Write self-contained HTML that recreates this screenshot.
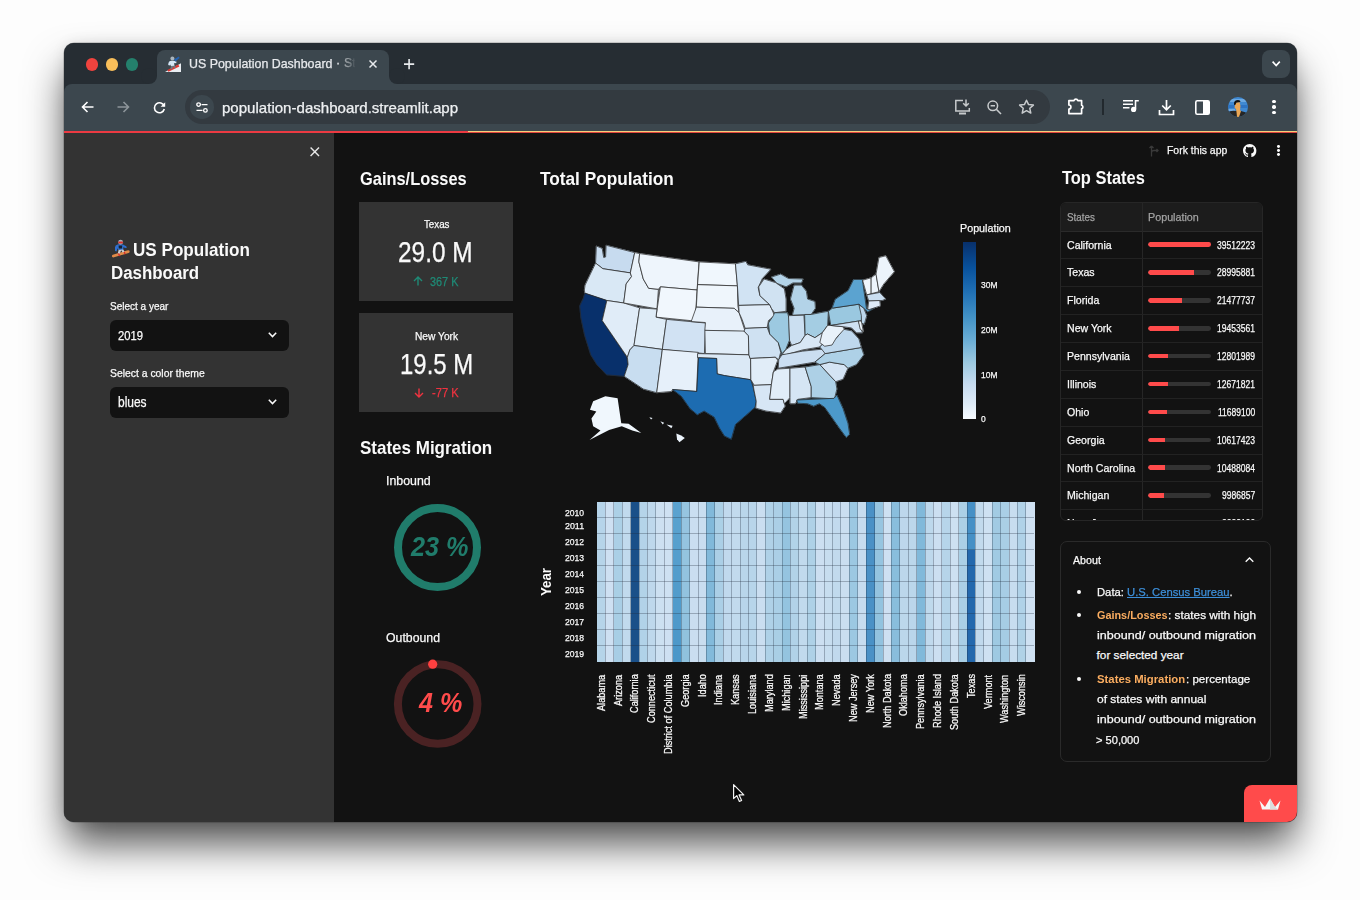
<!DOCTYPE html>
<html><head><meta charset="utf-8">
<style>
*{box-sizing:border-box;margin:0;padding:0}
html,body{width:1360px;height:900px;overflow:hidden;background:#fdfdfd;font-family:"Liberation Sans",sans-serif}
.a{position:absolute}
#win{position:absolute;left:64px;top:43px;width:1233px;height:779px;border-radius:10px;overflow:hidden;background:#262d33;box-shadow:0 0 0 0.5px rgba(0,0,0,0.3),0 0 14px rgba(0,0,0,0.08),0 24px 40px -3px rgba(0,0,0,0.7);}
#inner{position:absolute;left:-64px;top:-43px;width:1360px;height:900px}
.t{position:absolute;white-space:nowrap;line-height:1;transform-origin:0 0;-webkit-text-stroke:0.25px currentColor}
svg{position:absolute;overflow:visible}
</style></head>
<body>
<div id="win"><div id="inner">

<div class="a" style="left:64px;top:43px;width:1233px;height:41px;background:#262d33;"></div>
<div class="a" style="left:86.0px;top:58.2px;width:12.4px;height:12.4px;border-radius:50%;background:#f0433e"></div>
<div class="a" style="left:106.0px;top:58.2px;width:12.4px;height:12.4px;border-radius:50%;background:#f8be5a"></div>
<div class="a" style="left:126.0px;top:58.2px;width:12.4px;height:12.4px;border-radius:50%;background:#24806c"></div>
<div class="a" style="left:149px;top:76px;width:8px;height:8px;background:#3c474e;"></div>
<div class="a" style="left:141px;top:68px;width:16px;height:16px;border-radius:50%;background:#262d33"></div>
<div class="a" style="left:389px;top:76px;width:8px;height:8px;background:#3c474e;"></div>
<div class="a" style="left:389px;top:68px;width:16px;height:16px;border-radius:50%;background:#262d33"></div>
<div class="a" style="left:157px;top:50px;width:232px;height:34px;background:#3c474e;border-radius:8px 8px 0 0"></div>
<svg style="left:164px;top:55px" width="18" height="18" viewBox="0 0 18 18"><path d="M1 17L17 8.2V17Z" fill="#e9eef2"/><path d="M3.4 15L14.2 9.6L15.4 11.6L4.4 16.8Z" fill="#e2342f"/><path d="M7 10.6L6.4 14.2L8 14.4L9.2 11.6L10.6 13.4L12 12.8L10.4 10.2Z" fill="#6f7880"/><path d="M4.4 8.2Q4.6 6.2 7 5.8L10 5.8L12.6 6.8L12.2 8.2L10.2 8L10.4 10.8L6.8 11L6.4 9.6L5.6 10.4L4.2 10Z" fill="#d5e6f5"/><path d="M9.8 4.6L14.8 1.6L15.6 3L11.4 6.4Z" fill="#2462b0"/><circle cx="8.4" cy="3.6" r="2" fill="#a9b4bd"/></svg>
<div class="t" style="left:189.40px;top:58.00px;font-size:12.73px;color:#e8eaed;transform:scaleX(0.9751);">US Population Dashboard</div>
<div class="t" style="left:336px;top:57.2px;font-size:12.7px;color:#e8eaed;transform:scaleX(0.98)">·</div>
<div class="t" style="left:343.5px;top:57.2px;font-size:12.7px;color:#9aa0a4;transform:scaleX(0.98);-webkit-mask-image:linear-gradient(90deg,#000 30%,transparent 100%)">St</div>
<svg style="left:369px;top:60px" width="8" height="8" viewBox="0 0 8 8"><path d="M0.5 0.5L7.5 7.5M7.5 0.5L0.5 7.5" stroke="#e8eaed" stroke-width="1.5"/></svg>
<svg style="left:403.8px;top:59px" width="10.2" height="10.2" viewBox="0 0 10 10"><path d="M5 0V10M0 5H10" stroke="#e8eaed" stroke-width="1.6"/></svg>
<div class="a" style="left:1262px;top:50px;width:28px;height:28px;background:#3c474e;border-radius:8px"></div>
<svg style="left:1271.8px;top:61.2px" width="8.4" height="5.6" viewBox="0 0 8.4 5.6"><path d="M0.6 0.6L4.2 4.6L7.8 0.6" fill="none" stroke="#fff" stroke-width="1.6"/></svg>
<div class="a" style="left:64px;top:84px;width:1233px;height:47px;background:#3c474e;border-radius:8px 8px 0 0"></div>
<svg style="left:80.8px;top:101px" width="13" height="12" viewBox="0 0 13 12"><path d="M12.5 6H1.5M6.5 1L1.5 6L6.5 11" fill="none" stroke="#fff" stroke-width="1.6"/></svg>
<svg style="left:116.5px;top:101px" width="13" height="12" viewBox="0 0 13 12"><path d="M0.5 6H11.5M6.5 1L11.5 6L6.5 11" fill="none" stroke="#8d959a" stroke-width="1.6"/></svg>
<svg style="left:152.5px;top:100.5px" width="13" height="13" viewBox="0 0 13 13"><path d="M11.2 5.2A5 5 0 1 0 11.3 8" fill="none" stroke="#fff" stroke-width="1.6"/><path d="M12.2 1.2V5.8H7.6Z" fill="#fff"/></svg>
<div class="a" style="left:185px;top:90px;width:865px;height:34px;background:#333a40;border-radius:17px"></div>
<div class="a" style="left:190px;top:95.2px;width:23.6px;height:23.6px;border-radius:50%;background:#3c474e"></div>
<svg style="left:196px;top:101.5px" width="12" height="11" viewBox="0 0 12 11"><circle cx="2.6" cy="2.6" r="1.8" fill="none" stroke="#fff" stroke-width="1.3"/><path d="M5.5 2.6H11.5M0.5 8.4H6.5" stroke="#fff" stroke-width="1.3"/><circle cx="9.4" cy="8.4" r="1.8" fill="none" stroke="#fff" stroke-width="1.3"/></svg>
<div class="t" style="left:222.40px;top:101.50px;font-size:13.93px;color:#eef0f2;transform:scaleX(1.0815);">population-dashboard.streamlit.app</div>
<svg style="left:954px;top:99px" width="17" height="17" viewBox="0 0 17 17"><path d="M9 1.5H1.8V12H15.3V9" fill="none" stroke="#c7cacc" stroke-width="1.5"/><path d="M5 13.5V15.5H12V13.5" fill="#c7cacc"/><path d="M12 0.5V7M9.2 4.2L12 7L14.8 4.2" fill="none" stroke="#c7cacc" stroke-width="1.5"/></svg>
<svg style="left:986.5px;top:99.5px" width="15" height="15" viewBox="0 0 15 15"><circle cx="5.8" cy="5.8" r="4.8" fill="none" stroke="#c7cacc" stroke-width="1.5"/><path d="M3.6 5.8H8" stroke="#c7cacc" stroke-width="1.5"/><path d="M9.3 9.3L14 14" stroke="#c7cacc" stroke-width="1.6"/></svg>
<svg style="left:1017.5px;top:99px" width="17" height="16" viewBox="0 0 17 16"><path d="M8.5 1.2L10.6 5.6L15.4 6.1L11.8 9.3L12.8 14.1L8.5 11.7L4.2 14.1L5.2 9.3L1.6 6.1L6.4 5.6Z" fill="none" stroke="#c7cacc" stroke-width="1.5" stroke-linejoin="round"/></svg>
<svg style="left:1068px;top:97px" width="18" height="18" viewBox="0 0 18 18"><path d="M0.9 3.6H6A2 2 0 0 1 9.8 3.6H13.6V8.2A1.9 1.9 0 0 1 13.6 11.8V16.6H0.9V12A2 2 0 0 0 0.9 8Z" fill="none" stroke="#fff" stroke-width="1.7" stroke-linejoin="round"/></svg>
<div class="a" style="left:1102.3px;top:99px;width:1.6000000000001364px;height:16px;background:#22292e;"></div>
<svg style="left:1122.5px;top:99px" width="17" height="14" viewBox="0 0 17 14"><path d="M0 1.8H10M0 5.3H10M0 8.8H6.5" stroke="#fff" stroke-width="1.6"/><path d="M12.5 1.2V10.2M11.8 1.8H15.8" stroke="#fff" stroke-width="1.6"/><circle cx="10.6" cy="10.4" r="2.6" fill="#fff"/></svg>
<svg style="left:1157.5px;top:98.5px" width="17" height="17" viewBox="0 0 17 17"><path d="M8.5 1V10.5M4.2 6.5L8.5 10.8L12.8 6.5" fill="none" stroke="#fff" stroke-width="1.7"/><path d="M1.5 11V15.5H15.5V11" fill="none" stroke="#fff" stroke-width="1.7"/></svg>
<svg style="left:1194.5px;top:99.5px" width="15" height="15" viewBox="0 0 15 15"><rect x="0.8" y="0.8" width="13.4" height="13.4" rx="1.5" fill="none" stroke="#fff" stroke-width="1.6"/><rect x="8" y="0.8" width="6.2" height="13.4" fill="#fff"/></svg>
<svg style="left:1228px;top:96.7px" width="20" height="20" viewBox="0 0 20 20"><defs><clipPath id="avc"><circle cx="10" cy="10" r="10"/></clipPath></defs><g clip-path="url(#avc)"><rect width="20" height="20" fill="#3f89d2"/><rect y="2" width="20" height="3" fill="#7fb6ea" opacity="0.7"/><rect y="8" width="20" height="3" fill="#2a6fbf" opacity="0.8"/><rect y="12" width="7" height="2" fill="#8fc0ee" opacity="0.6"/><path d="M0 15Q5 13 8 14L10 13L13 14Q18 15 20 17V20H0Z" fill="#262626"/><path d="M7.5 5.5L11.5 5L12.5 9L12 13L13 14L11 20H9L8.5 15L8 12L6.5 10.5L7 8Z" fill="#eaa756"/><path d="M6 6Q6.5 3 10 3Q12.5 3.2 12.5 5L8.5 5.5L7.2 8L6.2 8Z" fill="#111"/></g></svg>
<div class="a" style="left:1272.3px;top:99.8px;width:3.4px;height:3.4px;border-radius:50%;background:#fff"></div>
<div class="a" style="left:1272.3px;top:105.3px;width:3.4px;height:3.4px;border-radius:50%;background:#fff"></div>
<div class="a" style="left:1272.3px;top:110.8px;width:3.4px;height:3.4px;border-radius:50%;background:#fff"></div>
<div class="a" style="left:64px;top:131px;width:404px;height:2px;background:#ec3a42;"></div>
<div class="a" style="left:468px;top:131px;width:829px;height:2px;background:#e0453e;"></div>
<div class="a" style="left:468px;top:131px;width:829px;height:1px;background:#f5cf7a;"></div>
<div class="a" style="left:64px;top:133px;width:270px;height:689px;background:#333333;"></div>
<div class="a" style="left:334px;top:133px;width:963px;height:689px;background:#121212;"></div>
<svg style="left:309.8px;top:147.2px" width="9.6" height="9.6" viewBox="0 0 10 10"><path d="M0.6 0.6L9.4 9.4M9.4 0.6L0.6 9.4" stroke="#e6e6e6" stroke-width="1.5"/></svg>
<svg style="left:108px;top:236px" width="26" height="26" viewBox="0 0 26 26"><path d="M4.2 19.3Q3.3 21.2 5.2 21.6L20.6 16.9Q22.3 16.2 21.3 14.6Q20.5 13.9 19 14.4L5.6 18.6Q4.7 18.9 4.2 19.3Z" fill="#e08a48"/><path d="M9.6 17.1L11 20.3L12.4 19.9L11 16.7ZM15.2 15.4L16.6 18.5L17.8 18.1L16.4 15Z" fill="#d4302c"/><path d="M10.8 13.2L9.8 17.3L11.8 17.6L13.2 14.2L14.6 16.4L16.6 15.8L14.8 12.8Z" fill="#c9cdd2"/><path d="M7 11.3Q7.2 9.2 9.6 8.6L12.4 8L15.5 8.8L18.2 10.2L19 11.6L17.6 12L15.2 11.2L15.4 13.6L10.6 14L9.4 12.2L8.6 15.4L7 15Z" fill="#2f6fcf"/><path d="M10.6 9.6L14.2 9.4L14 12.4L10.8 12.6Z" fill="#15202e"/><circle cx="12.6" cy="6.2" r="2.4" fill="#aab2ba"/><rect x="10.2" y="5.6" width="4.8" height="1.8" rx="0.8" fill="#d9302e"/></svg>
<div class="t" style="left:132.50px;top:242.30px;font-size:17.75px;color:#fafafa;font-weight:bold;-webkit-text-stroke:0;transform:scaleX(0.9633);">US Population</div>
<div class="t" style="left:110.60px;top:263.10px;font-size:19.20px;color:#fafafa;font-weight:bold;-webkit-text-stroke:0;transform:scaleX(0.8796);">Dashboard</div>
<div class="t" style="left:110.00px;top:301.10px;font-size:11.04px;color:#fafafa;transform:scaleX(0.9062);">Select a year</div>
<div class="a" style="left:110px;top:320px;width:179px;height:31px;background:#121212;border-radius:6px"></div>
<div class="t" style="left:118.40px;top:329.90px;font-size:12.76px;color:#fafafa;transform:scaleX(0.8806);">2019</div>
<svg style="left:268px;top:332px" width="9" height="6" viewBox="0 0 9 6"><path d="M0.8 0.8L4.5 4.6L8.2 0.8" fill="none" stroke="#fafafa" stroke-width="1.5"/></svg>
<div class="t" style="left:110.00px;top:367.90px;font-size:10.90px;color:#fafafa;transform:scaleX(0.9535);">Select a color theme</div>
<div class="a" style="left:110px;top:387px;width:179px;height:31px;background:#121212;border-radius:6px"></div>
<div class="t" style="left:118.40px;top:394.80px;font-size:14.21px;color:#fafafa;transform:scaleX(0.8423);">blues</div>
<svg style="left:268px;top:399px" width="9" height="6" viewBox="0 0 9 6"><path d="M0.8 0.8L4.5 4.6L8.2 0.8" fill="none" stroke="#fafafa" stroke-width="1.5"/></svg>
<svg style="left:1149px;top:144.5px" width="10" height="12" viewBox="0 0 10 12"><path d="M2.5 11.5V1M2.5 1L0.5 3M2.5 1L4.5 3M2.5 7.5Q2.5 5.5 5 5.5H9M7.5 4L9 5.5L7.5 7" fill="none" stroke="#3a3a3a" stroke-width="1.3"/></svg>
<div class="t" style="left:1166.50px;top:144.00px;font-size:11.64px;color:#fafafa;transform:scaleX(0.8965);">Fork this app</div>
<svg style="left:1242.7px;top:143.8px" width="13.4" height="13.4" viewBox="0 0 16 16"><path fill="#fafafa" d="M8 0C3.58 0 0 3.58 0 8c0 3.54 2.29 6.53 5.47 7.59.4.07.55-.17.55-.38 0-.19-.01-.82-.01-1.49-2.01.37-2.53-.49-2.69-.94-.09-.23-.48-.94-.82-1.13-.28-.15-.68-.52-.01-.53.63-.01 1.08.58 1.23.82.72 1.21 1.87.87 2.33.66.07-.52.28-.87.51-1.07-1.78-.2-3.64-.89-3.64-3.95 0-.87.31-1.59.82-2.15-.08-.2-.36-1.02.08-2.12 0 0 .67-.21 2.2.82.64-.18 1.32-.27 2-.27.68 0 1.36.09 2 .27 1.53-1.04 2.2-.82 2.2-.82.44 1.1.16 1.92.08 2.12.51.56.82 1.27.82 2.15 0 3.07-1.87 3.75-3.65 3.95.29.25.54.73.54 1.48 0 1.07-.01 1.93-.01 2.2 0 .21.15.46.55.38A8.013 8.013 0 0016 8c0-4.42-3.58-8-8-8z"/></svg>
<div class="a" style="left:1277.1px;top:144.9px;width:2.8px;height:2.8px;border-radius:50%;background:#fafafa"></div>
<div class="a" style="left:1277.1px;top:149.1px;width:2.8px;height:2.8px;border-radius:50%;background:#fafafa"></div>
<div class="a" style="left:1277.1px;top:153.3px;width:2.8px;height:2.8px;border-radius:50%;background:#fafafa"></div>
<div class="t" style="left:359.50px;top:169.50px;font-size:18.91px;color:#fafafa;font-weight:bold;-webkit-text-stroke:0;transform:scaleX(0.8682);">Gains/Losses</div>
<div class="t" style="left:540.00px;top:169.50px;font-size:18.91px;color:#fafafa;font-weight:bold;-webkit-text-stroke:0;transform:scaleX(0.9118);">Total Population</div>
<div class="t" style="left:1061.50px;top:169.40px;font-size:18.47px;color:#fafafa;font-weight:bold;-webkit-text-stroke:0;transform:scaleX(0.8909);">Top States</div>
<div class="t" style="left:360.00px;top:437.50px;font-size:19.05px;color:#fafafa;font-weight:bold;-webkit-text-stroke:0;transform:scaleX(0.8931);">States Migration</div>
<div class="a" style="left:359px;top:202px;width:154px;height:99px;background:#333333;"></div>
<div class="t" style="left:423.60px;top:218.75px;font-size:10.98px;color:#fafafa;transform:scaleX(0.8888);">Texas</div>
<div class="t" style="left:398.40px;top:237.90px;font-size:28.80px;color:#fafafa;transform:scaleX(0.8472);font-weight:normal">29.0 M</div>
<svg style="left:413px;top:276px" width="10" height="10" viewBox="0 0 10 10"><path d="M5 9.5V1M1 5L5 1L9 5" fill="none" stroke="#1f8a76" stroke-width="1.4"/></svg>
<div class="t" style="left:430.00px;top:275.50px;font-size:12.65px;color:#1f8a76;transform:scaleX(0.8590);">367 K</div>
<div class="a" style="left:359px;top:313px;width:154px;height:99px;background:#333333;"></div>
<div class="t" style="left:414.70px;top:330.75px;font-size:10.98px;color:#fafafa;transform:scaleX(0.9305);">New York</div>
<div class="t" style="left:399.80px;top:349.90px;font-size:28.80px;color:#fafafa;transform:scaleX(0.8313);">19.5 M</div>
<svg style="left:413.6px;top:388px" width="10" height="10" viewBox="0 0 10 10"><path d="M5 0.5V9M1 5L5 9L9 5" fill="none" stroke="#ef3340" stroke-width="1.4"/></svg>
<div class="t" style="left:431.50px;top:387.40px;font-size:12.65px;color:#ef3340;transform:scaleX(0.8828);">-77 K</div>
<div class="t" style="left:385.90px;top:475.30px;font-size:12.80px;color:#fafafa;transform:scaleX(0.9660);">Inbound</div>
<div class="t" style="left:386.10px;top:631.10px;font-size:13.48px;color:#fafafa;transform:scaleX(0.9122);">Outbound</div>
<svg style="left:0;top:0" width="1" height="1"><circle cx="437.5" cy="547.6" r="39.5" fill="none" stroke="#207c6b" stroke-width="8"/><circle cx="437.7" cy="704" r="39.8" fill="none" stroke="#4a2223" stroke-width="8"/><circle cx="432.7" cy="664.2" r="4.6" fill="#ff4040"/></svg>
<div class="t" style="left:410.64px;top:533.00px;font-size:27.38px;color:#207c6b;font-weight:bold;-webkit-text-stroke:0;font-style:italic;transform:scaleX(0.9219);">23 %</div>
<div class="t" style="left:418.64px;top:689.00px;font-size:27.78px;color:#ff4b4b;font-weight:bold;-webkit-text-stroke:0;font-style:italic;transform:scaleX(0.9040);">4 %</div>
<svg style="left:0;top:0" width="1" height="1"><g transform="translate(700,235) scale(0.2445)" stroke="#2a2a2a" stroke-linejoin="round"><polygon points="-424,45 -400,55 -394,92 -386,90 -384,42 -267,72 -285,155 -397,138 -414,125 -427,115" fill="#c7dbef" stroke="#c7dbef" stroke-width="3"/><polygon points="-427,115 -397,138 -285,155 -280,170 -302,200 -312,278 -381,268 -471,238 -473,225 -470,205" fill="#d9e8f5" stroke="#d9e8f5" stroke-width="3"/><polygon points="-471,238 -381,268 -400,350 -300,498 -294,530 -310,578 -382,572 -422,530 -447,490 -472,410 -487,340 -492,290 -477,258" fill="#08306b" stroke="#08306b" stroke-width="3"/><polygon points="-381,268 -312,278 -247,298 -270,452 -287,470 -297,500 -400,350" fill="#e0ecf8" stroke="#e0ecf8" stroke-width="3"/><polygon points="-267,72 -247,76 -250,110 -232,180 -210,218 -170,222 -176,302 -312,278 -302,200 -280,170 -285,155" fill="#e9f2fa" stroke="#e9f2fa" stroke-width="3"/><polygon points="-247,76 -4,110 -12,225 -162,212 -170,222 -210,218 -232,180 -250,110" fill="#eef5fc" stroke="#eef5fc" stroke-width="3"/><polygon points="-162,212 -12,225 -20,352 -180,336" fill="#f1f7fd" stroke="#f1f7fd" stroke-width="3"/><polygon points="-247,298 -176,303 -180,336 -137,345 -154,468 -270,452" fill="#dfecf7" stroke="#dfecf7" stroke-width="3"/><polygon points="-137,345 23,360 18,485 -154,468" fill="#d1e2f3" stroke="#d1e2f3" stroke-width="3"/><polygon points="-270,452 -154,468 -177,645 -232,630 -310,578 -294,530 -297,500 -287,470" fill="#c8ddf0" stroke="#c8ddf0" stroke-width="3"/><polygon points="-154,468 -7,480 -14,640 -112,632 -117,640 -177,645" fill="#e6f0fa" stroke="#e6f0fa" stroke-width="3"/><polygon points="-3,110 145,118 153,208 -10,203" fill="#f0f7fd" stroke="#f0f7fd" stroke-width="3"/><polygon points="-10,203 153,208 155,290 160,318 140,300 -15,295" fill="#eff6fc" stroke="#eff6fc" stroke-width="3"/><polygon points="-15,295 140,300 160,318 185,395 20,390 22,358 -36,354" fill="#e8f1fa" stroke="#e8f1fa" stroke-width="3"/><polygon points="20,390 180,393 198,412 200,490 22,485" fill="#e1edf8" stroke="#e1edf8" stroke-width="3"/><polygon points="-10,485 200,490 207,510 208,592 150,583 100,575 70,568 68,505 -10,502" fill="#dbe9f6" stroke="#dbe9f6" stroke-width="3"/><polygon points="-6,502 68,505 70,568 100,575 150,583 208,592 218,625 230,680 225,705 185,740 145,775 128,835 100,822 80,790 58,745 17,720 -11,735 -41,710 -76,660 -112,632 -13,640" fill="#1d6cb1" stroke="#1d6cb1" stroke-width="3"/><polygon points="145,118 188,108 195,122 290,140 255,178 238,215 245,248 285,285 158,288 153,208" fill="#d1e3f3" stroke="#d1e3f3" stroke-width="3"/><polygon points="158,288 285,285 292,300 305,330 280,350 275,378 185,382 172,345 160,318" fill="#e0ecf8" stroke="#e0ecf8" stroke-width="3"/><polygon points="180,393 185,382 275,378 285,405 320,440 330,480 322,510 308,500 205,505 200,490 198,412" fill="#cfe1f2" stroke="#cfe1f2" stroke-width="3"/><polygon points="207,505 308,500 318,512 300,560 292,612 222,615 208,592" fill="#e1edf8" stroke="#e1edf8" stroke-width="3"/><polygon points="218,615 292,612 285,672 340,672 348,700 330,728 270,720 228,708 230,680 220,630" fill="#d7e6f5" stroke="#d7e6f5" stroke-width="3"/><polygon points="240,212 262,180 310,195 345,220 352,262 352,312 305,318 292,300 285,285 245,248" fill="#d0e2f2" stroke="#d0e2f2" stroke-width="3"/><polygon points="292,172 330,160 362,178 422,180 415,196 380,196 352,212 315,198" fill="#b3d3e8" stroke="#b3d3e8" stroke-width="3"/><polygon points="385,205 415,205 435,230 440,262 470,272 472,300 455,325 378,328 385,300 370,262" fill="#b3d3e8" stroke="#b3d3e8" stroke-width="3"/><polygon points="305,318 358,318 364,340 366,430 350,470 335,485 320,440 285,405 280,360 300,330" fill="#9cc9e1" stroke="#9cc9e1" stroke-width="3"/><polygon points="362,330 425,328 430,410 410,440 375,452 366,430" fill="#cbdff1" stroke="#cbdff1" stroke-width="3"/><polygon points="428,325 455,325 490,318 525,312 522,370 500,400 470,420 440,405 430,410" fill="#a4cde3" stroke="#a4cde3" stroke-width="3"/><polygon points="350,470 375,452 410,440 430,410 440,405 470,420 500,400 515,432 490,458 420,470 350,490 335,490" fill="#d8e7f5" stroke="#d8e7f5" stroke-width="3"/><polygon points="335,490 420,475 520,465 512,485 470,520 440,525 320,545 322,510" fill="#cbdef1" stroke="#cbdef1" stroke-width="3"/><polygon points="318,548 368,545 368,665 345,690 340,672 285,672 292,612 300,560" fill="#e1edf8" stroke="#e1edf8" stroke-width="3"/><polygon points="368,545 430,540 455,620 455,665 400,672 390,690 368,690 368,665" fill="#d5e5f4" stroke="#d5e5f4" stroke-width="3"/><polygon points="430,540 490,530 555,600 560,630 550,670 455,665 455,620" fill="#add0e6" stroke="#add0e6" stroke-width="3"/><polygon points="395,675 548,668 560,655 585,710 605,770 612,815 598,828 570,790 535,740 510,705 488,690 465,700 440,690 400,688" fill="#4c99ca" stroke="#4c99ca" stroke-width="3"/><polygon points="490,530 530,520 590,530 605,545 585,590 555,600" fill="#d4e4f4" stroke="#d4e4f4" stroke-width="3"/><polygon points="470,520 512,485 660,460 670,490 640,530 605,545 590,530 530,520 490,530" fill="#aed1e7" stroke="#aed1e7" stroke-width="3"/><polygon points="490,458 515,432 560,420 585,385 620,392 650,425 660,460 512,485" fill="#bfd8ed" stroke="#bfd8ed" stroke-width="3"/><polygon points="500,400 522,370 535,370 585,375 590,385 558,420 540,450 510,455 490,440" fill="#e9f2fa" stroke="#e9f2fa" stroke-width="3"/><polygon points="525,312 542,299 650,283 670,315 660,350 535,370" fill="#9ac8e0" stroke="#9ac8e0" stroke-width="3"/><polygon points="541,297 553,263 606,227 628,182 664,182 681,302 717,297 686,314 650,283 542,299" fill="#5ba3d0" stroke="#5ba3d0" stroke-width="3"/><polygon points="650,285 670,300 682,330 672,365 660,360 660,330" fill="#bcd7ec" stroke="#bcd7ec" stroke-width="3"/><polygon points="535,370 648,352 655,375 665,400 640,400 620,380 585,375" fill="#cfe1f2" stroke="#cfe1f2" stroke-width="3"/><polygon points="648,352 660,352 668,395 655,385" fill="#eef6fc" stroke="#eef6fc" stroke-width="3"/><polygon points="665,185 700,175 700,240 682,245" fill="#f1f7fd" stroke="#f1f7fd" stroke-width="3"/><polygon points="700,175 720,160 732,232 700,240" fill="#ecf4fb" stroke="#ecf4fb" stroke-width="3"/><polygon points="720,160 732,92 760,85 795,150 752,200 732,232" fill="#ecf4fb" stroke="#ecf4fb" stroke-width="3"/><polygon points="682,245 735,235 760,262 745,268 690,270" fill="#cadef0" stroke="#cadef0" stroke-width="3"/><polygon points="690,270 735,268 738,290 692,305 686,305" fill="#ddeaf7" stroke="#ddeaf7" stroke-width="3"/><polygon points="-424,45 -400,55 -394,92 -386,90 -384,42 -267,72 -285,155 -397,138 -414,125 -427,115" fill="#c7dbef" stroke-width="3.07"/><polygon points="-427,115 -397,138 -285,155 -280,170 -302,200 -312,278 -381,268 -471,238 -473,225 -470,205" fill="#d9e8f5" stroke-width="3.07"/><polygon points="-471,238 -381,268 -400,350 -300,498 -294,530 -310,578 -382,572 -422,530 -447,490 -472,410 -487,340 -492,290 -477,258" fill="#08306b" stroke-width="3.07"/><polygon points="-381,268 -312,278 -247,298 -270,452 -287,470 -297,500 -400,350" fill="#e0ecf8" stroke-width="3.07"/><polygon points="-267,72 -247,76 -250,110 -232,180 -210,218 -170,222 -176,302 -312,278 -302,200 -280,170 -285,155" fill="#e9f2fa" stroke-width="3.07"/><polygon points="-247,76 -4,110 -12,225 -162,212 -170,222 -210,218 -232,180 -250,110" fill="#eef5fc" stroke-width="3.07"/><polygon points="-162,212 -12,225 -20,352 -180,336" fill="#f1f7fd" stroke-width="3.07"/><polygon points="-247,298 -176,303 -180,336 -137,345 -154,468 -270,452" fill="#dfecf7" stroke-width="3.07"/><polygon points="-137,345 23,360 18,485 -154,468" fill="#d1e2f3" stroke-width="3.07"/><polygon points="-270,452 -154,468 -177,645 -232,630 -310,578 -294,530 -297,500 -287,470" fill="#c8ddf0" stroke-width="3.07"/><polygon points="-154,468 -7,480 -14,640 -112,632 -117,640 -177,645" fill="#e6f0fa" stroke-width="3.07"/><polygon points="-3,110 145,118 153,208 -10,203" fill="#f0f7fd" stroke-width="3.07"/><polygon points="-10,203 153,208 155,290 160,318 140,300 -15,295" fill="#eff6fc" stroke-width="3.07"/><polygon points="-15,295 140,300 160,318 185,395 20,390 22,358 -36,354" fill="#e8f1fa" stroke-width="3.07"/><polygon points="20,390 180,393 198,412 200,490 22,485" fill="#e1edf8" stroke-width="3.07"/><polygon points="-10,485 200,490 207,510 208,592 150,583 100,575 70,568 68,505 -10,502" fill="#dbe9f6" stroke-width="3.07"/><polygon points="-6,502 68,505 70,568 100,575 150,583 208,592 218,625 230,680 225,705 185,740 145,775 128,835 100,822 80,790 58,745 17,720 -11,735 -41,710 -76,660 -112,632 -13,640" fill="#1d6cb1" stroke-width="3.07"/><polygon points="145,118 188,108 195,122 290,140 255,178 238,215 245,248 285,285 158,288 153,208" fill="#d1e3f3" stroke-width="3.07"/><polygon points="158,288 285,285 292,300 305,330 280,350 275,378 185,382 172,345 160,318" fill="#e0ecf8" stroke-width="3.07"/><polygon points="180,393 185,382 275,378 285,405 320,440 330,480 322,510 308,500 205,505 200,490 198,412" fill="#cfe1f2" stroke-width="3.07"/><polygon points="207,505 308,500 318,512 300,560 292,612 222,615 208,592" fill="#e1edf8" stroke-width="3.07"/><polygon points="218,615 292,612 285,672 340,672 348,700 330,728 270,720 228,708 230,680 220,630" fill="#d7e6f5" stroke-width="3.07"/><polygon points="240,212 262,180 310,195 345,220 352,262 352,312 305,318 292,300 285,285 245,248" fill="#d0e2f2" stroke-width="3.07"/><polygon points="292,172 330,160 362,178 422,180 415,196 380,196 352,212 315,198" fill="#b3d3e8" stroke-width="3.07"/><polygon points="385,205 415,205 435,230 440,262 470,272 472,300 455,325 378,328 385,300 370,262" fill="#b3d3e8" stroke-width="3.07"/><polygon points="305,318 358,318 364,340 366,430 350,470 335,485 320,440 285,405 280,360 300,330" fill="#9cc9e1" stroke-width="3.07"/><polygon points="362,330 425,328 430,410 410,440 375,452 366,430" fill="#cbdff1" stroke-width="3.07"/><polygon points="428,325 455,325 490,318 525,312 522,370 500,400 470,420 440,405 430,410" fill="#a4cde3" stroke-width="3.07"/><polygon points="350,470 375,452 410,440 430,410 440,405 470,420 500,400 515,432 490,458 420,470 350,490 335,490" fill="#d8e7f5" stroke-width="3.07"/><polygon points="335,490 420,475 520,465 512,485 470,520 440,525 320,545 322,510" fill="#cbdef1" stroke-width="3.07"/><polygon points="318,548 368,545 368,665 345,690 340,672 285,672 292,612 300,560" fill="#e1edf8" stroke-width="3.07"/><polygon points="368,545 430,540 455,620 455,665 400,672 390,690 368,690 368,665" fill="#d5e5f4" stroke-width="3.07"/><polygon points="430,540 490,530 555,600 560,630 550,670 455,665 455,620" fill="#add0e6" stroke-width="3.07"/><polygon points="395,675 548,668 560,655 585,710 605,770 612,815 598,828 570,790 535,740 510,705 488,690 465,700 440,690 400,688" fill="#4c99ca" stroke-width="3.07"/><polygon points="490,530 530,520 590,530 605,545 585,590 555,600" fill="#d4e4f4" stroke-width="3.07"/><polygon points="470,520 512,485 660,460 670,490 640,530 605,545 590,530 530,520 490,530" fill="#aed1e7" stroke-width="3.07"/><polygon points="490,458 515,432 560,420 585,385 620,392 650,425 660,460 512,485" fill="#bfd8ed" stroke-width="3.07"/><polygon points="500,400 522,370 535,370 585,375 590,385 558,420 540,450 510,455 490,440" fill="#e9f2fa" stroke-width="3.07"/><polygon points="525,312 542,299 650,283 670,315 660,350 535,370" fill="#9ac8e0" stroke-width="3.07"/><polygon points="541,297 553,263 606,227 628,182 664,182 681,302 717,297 686,314 650,283 542,299" fill="#5ba3d0" stroke-width="3.07"/><polygon points="650,285 670,300 682,330 672,365 660,360 660,330" fill="#bcd7ec" stroke-width="3.07"/><polygon points="535,370 648,352 655,375 665,400 640,400 620,380 585,375" fill="#cfe1f2" stroke-width="3.07"/><polygon points="648,352 660,352 668,395 655,385" fill="#eef6fc" stroke-width="3.07"/><polygon points="665,185 700,175 700,240 682,245" fill="#f1f7fd" stroke-width="3.07"/><polygon points="700,175 720,160 732,232 700,240" fill="#ecf4fb" stroke-width="3.07"/><polygon points="720,160 732,92 760,85 795,150 752,200 732,232" fill="#ecf4fb" stroke-width="3.07"/><polygon points="682,245 735,235 760,262 745,268 690,270" fill="#cadef0" stroke-width="3.07"/><polygon points="690,270 735,268 738,290 692,305 686,305" fill="#ddeaf7" stroke-width="3.07"/><polygon points="-437,680 -387,660 -337,668 -322,770 -292,772 -240,810 -277,800 -320,782 -372,798 -452,838 -407,800 -437,782 -444,750 -424,722 -450,715" fill="#f0f7fd" stroke-width="0.00"/><polygon points="-97,812 -77,820 -62,830 -84,848 -94,835" fill="#ebf3fb" stroke-width="0.00"/><polygon points="-162,762 -147,768 -152,775" fill="#ebf3fb" stroke-width="0.00"/><polygon points="-137,775 -112,780 -117,790" fill="#ebf3fb" stroke-width="0.00"/><polygon points="-207,745 -194,748 -200,755" fill="#ebf3fb" stroke-width="0.00"/></g></svg>
<div class="a" style="left:962.9px;top:241.8px;width:13px;height:177.2px;background:linear-gradient(0deg,#f7fbff 0.0%,#deebf7 8.7%,#c6dbef 19.6%,#9ecae1 31.5%,#6baed6 44.2%,#4292c6 57.5%,#2171b5 71.3%,#08519c 85.5%,#08306b 100.0%)"></div>
<div class="t" style="left:959.60px;top:222.70px;font-size:11.35px;color:#fafafa;transform:scaleX(0.9471);">Population</div>
<div class="t" style="left:980.60px;top:280.00px;font-size:9.46px;color:#fafafa;transform:scaleX(0.8965);">30M</div>
<div class="t" style="left:980.60px;top:325.20px;font-size:9.46px;color:#fafafa;transform:scaleX(0.8965);">20M</div>
<div class="t" style="left:980.60px;top:369.60px;font-size:9.46px;color:#fafafa;transform:scaleX(0.8965);">10M</div>
<div class="t" style="left:980.60px;top:414.00px;font-size:9.46px;color:#fafafa;transform:scaleX(0.8965);">0</div>
<svg style="left:596.6px;top:501.5px" width="437.3" height="160.1" viewBox="0 0 437.30 160.10" shape-rendering="crispEdges"><rect x="0.00" y="0.00" width="8.71" height="16.31" fill="#b6d4ea"/><rect x="0.00" y="16.01" width="8.71" height="16.31" fill="#b6d4ea"/><rect x="0.00" y="32.02" width="8.71" height="16.31" fill="#b6d4e9"/><rect x="0.00" y="48.03" width="8.71" height="16.31" fill="#b6d4e9"/><rect x="0.00" y="64.04" width="8.71" height="16.31" fill="#b6d4e9"/><rect x="0.00" y="80.05" width="8.71" height="16.31" fill="#b6d4e9"/><rect x="0.00" y="96.06" width="8.71" height="16.31" fill="#b6d4e9"/><rect x="0.00" y="112.07" width="8.71" height="16.31" fill="#b6d4e9"/><rect x="0.00" y="128.08" width="8.71" height="16.31" fill="#b6d4e9"/><rect x="0.00" y="144.09" width="8.71" height="16.31" fill="#b5d4e9"/><rect x="8.41" y="0.00" width="8.71" height="16.31" fill="#cee0f2"/><rect x="8.41" y="16.01" width="8.71" height="16.31" fill="#cee0f2"/><rect x="8.41" y="32.02" width="8.71" height="16.31" fill="#cee0f2"/><rect x="8.41" y="48.03" width="8.71" height="16.31" fill="#cee0f2"/><rect x="8.41" y="64.04" width="8.71" height="16.31" fill="#cee0f2"/><rect x="8.41" y="80.05" width="8.71" height="16.31" fill="#cee0f2"/><rect x="8.41" y="96.06" width="8.71" height="16.31" fill="#cee0f2"/><rect x="8.41" y="112.07" width="8.71" height="16.31" fill="#cee0f2"/><rect x="8.41" y="128.08" width="8.71" height="16.31" fill="#cee0f2"/><rect x="8.41" y="144.09" width="8.71" height="16.31" fill="#cee0f2"/><rect x="16.82" y="0.00" width="8.71" height="16.31" fill="#acd0e6"/><rect x="16.82" y="16.01" width="8.71" height="16.31" fill="#acd0e6"/><rect x="16.82" y="32.02" width="8.71" height="16.31" fill="#abcfe6"/><rect x="16.82" y="48.03" width="8.71" height="16.31" fill="#aacfe6"/><rect x="16.82" y="64.04" width="8.71" height="16.31" fill="#aacfe6"/><rect x="16.82" y="80.05" width="8.71" height="16.31" fill="#a9cfe5"/><rect x="16.82" y="96.06" width="8.71" height="16.31" fill="#a9cee5"/><rect x="16.82" y="112.07" width="8.71" height="16.31" fill="#a8cee5"/><rect x="16.82" y="128.08" width="8.71" height="16.31" fill="#a7cee5"/><rect x="16.82" y="144.09" width="8.71" height="16.31" fill="#a7cde5"/><rect x="25.23" y="0.00" width="8.71" height="16.31" fill="#c1daed"/><rect x="25.23" y="16.01" width="8.71" height="16.31" fill="#c1daed"/><rect x="25.23" y="32.02" width="8.71" height="16.31" fill="#c1daed"/><rect x="25.23" y="48.03" width="8.71" height="16.31" fill="#c1daed"/><rect x="25.23" y="64.04" width="8.71" height="16.31" fill="#c1daed"/><rect x="25.23" y="80.05" width="8.71" height="16.31" fill="#c1daed"/><rect x="25.23" y="96.06" width="8.71" height="16.31" fill="#c1daed"/><rect x="25.23" y="112.07" width="8.71" height="16.31" fill="#c1daed"/><rect x="25.23" y="128.08" width="8.71" height="16.31" fill="#c1daed"/><rect x="25.23" y="144.09" width="8.71" height="16.31" fill="#c1daed"/><rect x="33.64" y="0.00" width="8.71" height="16.31" fill="#1a5089"/><rect x="33.64" y="16.01" width="8.71" height="16.31" fill="#1a5089"/><rect x="33.64" y="32.02" width="8.71" height="16.31" fill="#1a5089"/><rect x="33.64" y="48.03" width="8.71" height="16.31" fill="#1a5089"/><rect x="33.64" y="64.04" width="8.71" height="16.31" fill="#1a5089"/><rect x="33.64" y="80.05" width="8.71" height="16.31" fill="#1a5089"/><rect x="33.64" y="96.06" width="8.71" height="16.31" fill="#1a5089"/><rect x="33.64" y="112.07" width="8.71" height="16.31" fill="#1a5089"/><rect x="33.64" y="128.08" width="8.71" height="16.31" fill="#1a5089"/><rect x="33.64" y="144.09" width="8.71" height="16.31" fill="#1a5089"/><rect x="42.05" y="0.00" width="8.71" height="16.31" fill="#b5d4e9"/><rect x="42.05" y="16.01" width="8.71" height="16.31" fill="#b4d4e9"/><rect x="42.05" y="32.02" width="8.71" height="16.31" fill="#b4d3e9"/><rect x="42.05" y="48.03" width="8.71" height="16.31" fill="#b3d3e9"/><rect x="42.05" y="64.04" width="8.71" height="16.31" fill="#b3d3e8"/><rect x="42.05" y="80.05" width="8.71" height="16.31" fill="#b2d3e8"/><rect x="42.05" y="96.06" width="8.71" height="16.31" fill="#b2d2e8"/><rect x="42.05" y="112.07" width="8.71" height="16.31" fill="#b1d2e8"/><rect x="42.05" y="128.08" width="8.71" height="16.31" fill="#b1d2e8"/><rect x="42.05" y="144.09" width="8.71" height="16.31" fill="#b0d2e8"/><rect x="50.46" y="0.00" width="8.71" height="16.31" fill="#bed8ec"/><rect x="50.46" y="16.01" width="8.71" height="16.31" fill="#bed8ec"/><rect x="50.46" y="32.02" width="8.71" height="16.31" fill="#bed8ec"/><rect x="50.46" y="48.03" width="8.71" height="16.31" fill="#bed8ec"/><rect x="50.46" y="64.04" width="8.71" height="16.31" fill="#bed8ec"/><rect x="50.46" y="80.05" width="8.71" height="16.31" fill="#bed8ec"/><rect x="50.46" y="96.06" width="8.71" height="16.31" fill="#bed8ec"/><rect x="50.46" y="112.07" width="8.71" height="16.31" fill="#bed8ec"/><rect x="50.46" y="128.08" width="8.71" height="16.31" fill="#bed8ec"/><rect x="50.46" y="144.09" width="8.71" height="16.31" fill="#bed8ec"/><rect x="58.87" y="0.00" width="8.71" height="16.31" fill="#cde0f1"/><rect x="58.87" y="16.01" width="8.71" height="16.31" fill="#cde0f1"/><rect x="58.87" y="32.02" width="8.71" height="16.31" fill="#cde0f1"/><rect x="58.87" y="48.03" width="8.71" height="16.31" fill="#cce0f1"/><rect x="58.87" y="64.04" width="8.71" height="16.31" fill="#cce0f1"/><rect x="58.87" y="80.05" width="8.71" height="16.31" fill="#cce0f1"/><rect x="58.87" y="96.06" width="8.71" height="16.31" fill="#cce0f1"/><rect x="58.87" y="112.07" width="8.71" height="16.31" fill="#cce0f1"/><rect x="58.87" y="128.08" width="8.71" height="16.31" fill="#cce0f1"/><rect x="58.87" y="144.09" width="8.71" height="16.31" fill="#cce0f1"/><rect x="67.28" y="0.00" width="8.71" height="16.31" fill="#cfe1f2"/><rect x="67.28" y="16.01" width="8.71" height="16.31" fill="#cfe1f2"/><rect x="67.28" y="32.02" width="8.71" height="16.31" fill="#cee1f2"/><rect x="67.28" y="48.03" width="8.71" height="16.31" fill="#cee1f2"/><rect x="67.28" y="64.04" width="8.71" height="16.31" fill="#cee1f2"/><rect x="67.28" y="80.05" width="8.71" height="16.31" fill="#cee1f2"/><rect x="67.28" y="96.06" width="8.71" height="16.31" fill="#cee1f2"/><rect x="67.28" y="112.07" width="8.71" height="16.31" fill="#cee0f2"/><rect x="67.28" y="128.08" width="8.71" height="16.31" fill="#cee0f2"/><rect x="67.28" y="144.09" width="8.71" height="16.31" fill="#cee0f2"/><rect x="75.69" y="0.00" width="8.71" height="16.31" fill="#5aa2cf"/><rect x="75.69" y="16.01" width="8.71" height="16.31" fill="#58a1ce"/><rect x="75.69" y="32.02" width="8.71" height="16.31" fill="#57a0cd"/><rect x="75.69" y="48.03" width="8.71" height="16.31" fill="#559ecd"/><rect x="75.69" y="64.04" width="8.71" height="16.31" fill="#539dcc"/><rect x="75.69" y="80.05" width="8.71" height="16.31" fill="#529ccb"/><rect x="75.69" y="96.06" width="8.71" height="16.31" fill="#509bcb"/><rect x="75.69" y="112.07" width="8.71" height="16.31" fill="#4e99ca"/><rect x="75.69" y="128.08" width="8.71" height="16.31" fill="#4d98c9"/><rect x="75.69" y="144.09" width="8.71" height="16.31" fill="#4b97c9"/><rect x="84.10" y="0.00" width="8.71" height="16.31" fill="#96c5e0"/><rect x="84.10" y="16.01" width="8.71" height="16.31" fill="#96c4e0"/><rect x="84.10" y="32.02" width="8.71" height="16.31" fill="#95c4e0"/><rect x="84.10" y="48.03" width="8.71" height="16.31" fill="#94c4df"/><rect x="84.10" y="64.04" width="8.71" height="16.31" fill="#93c3df"/><rect x="84.10" y="80.05" width="8.71" height="16.31" fill="#93c3df"/><rect x="84.10" y="96.06" width="8.71" height="16.31" fill="#92c3df"/><rect x="84.10" y="112.07" width="8.71" height="16.31" fill="#91c2df"/><rect x="84.10" y="128.08" width="8.71" height="16.31" fill="#91c2de"/><rect x="84.10" y="144.09" width="8.71" height="16.31" fill="#90c2de"/><rect x="92.51" y="0.00" width="8.71" height="16.31" fill="#cadef0"/><rect x="92.51" y="16.01" width="8.71" height="16.31" fill="#cadef0"/><rect x="92.51" y="32.02" width="8.71" height="16.31" fill="#cadef0"/><rect x="92.51" y="48.03" width="8.71" height="16.31" fill="#cadef0"/><rect x="92.51" y="64.04" width="8.71" height="16.31" fill="#cadef0"/><rect x="92.51" y="80.05" width="8.71" height="16.31" fill="#cadef0"/><rect x="92.51" y="96.06" width="8.71" height="16.31" fill="#cadef0"/><rect x="92.51" y="112.07" width="8.71" height="16.31" fill="#cadef0"/><rect x="92.51" y="128.08" width="8.71" height="16.31" fill="#cadef0"/><rect x="92.51" y="144.09" width="8.71" height="16.31" fill="#cadef0"/><rect x="100.92" y="0.00" width="8.71" height="16.31" fill="#c9def0"/><rect x="100.92" y="16.01" width="8.71" height="16.31" fill="#c9def0"/><rect x="100.92" y="32.02" width="8.71" height="16.31" fill="#c8ddf0"/><rect x="100.92" y="48.03" width="8.71" height="16.31" fill="#c8ddf0"/><rect x="100.92" y="64.04" width="8.71" height="16.31" fill="#c8ddf0"/><rect x="100.92" y="80.05" width="8.71" height="16.31" fill="#c8ddf0"/><rect x="100.92" y="96.06" width="8.71" height="16.31" fill="#c8ddef"/><rect x="100.92" y="112.07" width="8.71" height="16.31" fill="#c8ddef"/><rect x="100.92" y="128.08" width="8.71" height="16.31" fill="#c8ddef"/><rect x="100.92" y="144.09" width="8.71" height="16.31" fill="#c7ddef"/><rect x="109.33" y="0.00" width="8.71" height="16.31" fill="#81b9da"/><rect x="109.33" y="16.01" width="8.71" height="16.31" fill="#81b9da"/><rect x="109.33" y="32.02" width="8.71" height="16.31" fill="#81b9da"/><rect x="109.33" y="48.03" width="8.71" height="16.31" fill="#81b9da"/><rect x="109.33" y="64.04" width="8.71" height="16.31" fill="#81b9da"/><rect x="109.33" y="80.05" width="8.71" height="16.31" fill="#81b9da"/><rect x="109.33" y="96.06" width="8.71" height="16.31" fill="#81b9da"/><rect x="109.33" y="112.07" width="8.71" height="16.31" fill="#81b9da"/><rect x="109.33" y="128.08" width="8.71" height="16.31" fill="#82badb"/><rect x="109.33" y="144.09" width="8.71" height="16.31" fill="#82badb"/><rect x="117.73" y="0.00" width="8.71" height="16.31" fill="#acd0e6"/><rect x="117.73" y="16.01" width="8.71" height="16.31" fill="#abd0e6"/><rect x="117.73" y="32.02" width="8.71" height="16.31" fill="#abcfe6"/><rect x="117.73" y="48.03" width="8.71" height="16.31" fill="#abcfe6"/><rect x="117.73" y="64.04" width="8.71" height="16.31" fill="#abcfe6"/><rect x="117.73" y="80.05" width="8.71" height="16.31" fill="#abcfe6"/><rect x="117.73" y="96.06" width="8.71" height="16.31" fill="#abcfe6"/><rect x="117.73" y="112.07" width="8.71" height="16.31" fill="#aacfe6"/><rect x="117.73" y="128.08" width="8.71" height="16.31" fill="#aacfe6"/><rect x="117.73" y="144.09" width="8.71" height="16.31" fill="#aacfe6"/><rect x="126.14" y="0.00" width="8.71" height="16.31" fill="#c1d9ed"/><rect x="126.14" y="16.01" width="8.71" height="16.31" fill="#c1d9ed"/><rect x="126.14" y="32.02" width="8.71" height="16.31" fill="#c1d9ed"/><rect x="126.14" y="48.03" width="8.71" height="16.31" fill="#c1d9ed"/><rect x="126.14" y="64.04" width="8.71" height="16.31" fill="#c0d9ed"/><rect x="126.14" y="80.05" width="8.71" height="16.31" fill="#c0d9ed"/><rect x="126.14" y="96.06" width="8.71" height="16.31" fill="#c0d9ed"/><rect x="126.14" y="112.07" width="8.71" height="16.31" fill="#c0d9ed"/><rect x="126.14" y="128.08" width="8.71" height="16.31" fill="#c0d9ed"/><rect x="126.14" y="144.09" width="8.71" height="16.31" fill="#c0d9ed"/><rect x="134.55" y="0.00" width="8.71" height="16.31" fill="#c2daed"/><rect x="134.55" y="16.01" width="8.71" height="16.31" fill="#c2daed"/><rect x="134.55" y="32.02" width="8.71" height="16.31" fill="#c2daed"/><rect x="134.55" y="48.03" width="8.71" height="16.31" fill="#c2daed"/><rect x="134.55" y="64.04" width="8.71" height="16.31" fill="#c2daed"/><rect x="134.55" y="80.05" width="8.71" height="16.31" fill="#c2daed"/><rect x="134.55" y="96.06" width="8.71" height="16.31" fill="#c2daed"/><rect x="134.55" y="112.07" width="8.71" height="16.31" fill="#c1daed"/><rect x="134.55" y="128.08" width="8.71" height="16.31" fill="#c1daed"/><rect x="134.55" y="144.09" width="8.71" height="16.31" fill="#c1daed"/><rect x="142.96" y="0.00" width="8.71" height="16.31" fill="#b9d6ea"/><rect x="142.96" y="16.01" width="8.71" height="16.31" fill="#b9d6ea"/><rect x="142.96" y="32.02" width="8.71" height="16.31" fill="#b9d6ea"/><rect x="142.96" y="48.03" width="8.71" height="16.31" fill="#b9d6ea"/><rect x="142.96" y="64.04" width="8.71" height="16.31" fill="#b9d6ea"/><rect x="142.96" y="80.05" width="8.71" height="16.31" fill="#b9d6ea"/><rect x="142.96" y="96.06" width="8.71" height="16.31" fill="#b8d5ea"/><rect x="142.96" y="112.07" width="8.71" height="16.31" fill="#b8d5ea"/><rect x="142.96" y="128.08" width="8.71" height="16.31" fill="#b8d5ea"/><rect x="142.96" y="144.09" width="8.71" height="16.31" fill="#b8d5ea"/><rect x="151.37" y="0.00" width="8.71" height="16.31" fill="#b8d5ea"/><rect x="151.37" y="16.01" width="8.71" height="16.31" fill="#b8d5ea"/><rect x="151.37" y="32.02" width="8.71" height="16.31" fill="#b8d5ea"/><rect x="151.37" y="48.03" width="8.71" height="16.31" fill="#b8d5ea"/><rect x="151.37" y="64.04" width="8.71" height="16.31" fill="#b7d5ea"/><rect x="151.37" y="80.05" width="8.71" height="16.31" fill="#b7d5ea"/><rect x="151.37" y="96.06" width="8.71" height="16.31" fill="#b7d5ea"/><rect x="151.37" y="112.07" width="8.71" height="16.31" fill="#b7d5ea"/><rect x="151.37" y="128.08" width="8.71" height="16.31" fill="#b7d5ea"/><rect x="151.37" y="144.09" width="8.71" height="16.31" fill="#b7d5ea"/><rect x="159.78" y="0.00" width="8.71" height="16.31" fill="#cadef0"/><rect x="159.78" y="16.01" width="8.71" height="16.31" fill="#cadef0"/><rect x="159.78" y="32.02" width="8.71" height="16.31" fill="#cadef0"/><rect x="159.78" y="48.03" width="8.71" height="16.31" fill="#cadef0"/><rect x="159.78" y="64.04" width="8.71" height="16.31" fill="#cadef0"/><rect x="159.78" y="80.05" width="8.71" height="16.31" fill="#cadef0"/><rect x="159.78" y="96.06" width="8.71" height="16.31" fill="#cadef0"/><rect x="159.78" y="112.07" width="8.71" height="16.31" fill="#cadef0"/><rect x="159.78" y="128.08" width="8.71" height="16.31" fill="#cadef0"/><rect x="159.78" y="144.09" width="8.71" height="16.31" fill="#cadef0"/><rect x="168.19" y="0.00" width="8.71" height="16.31" fill="#b0d2e8"/><rect x="168.19" y="16.01" width="8.71" height="16.31" fill="#b0d2e7"/><rect x="168.19" y="32.02" width="8.71" height="16.31" fill="#b0d1e7"/><rect x="168.19" y="48.03" width="8.71" height="16.31" fill="#afd1e7"/><rect x="168.19" y="64.04" width="8.71" height="16.31" fill="#afd1e7"/><rect x="168.19" y="80.05" width="8.71" height="16.31" fill="#afd1e7"/><rect x="168.19" y="96.06" width="8.71" height="16.31" fill="#afd1e7"/><rect x="168.19" y="112.07" width="8.71" height="16.31" fill="#afd1e7"/><rect x="168.19" y="128.08" width="8.71" height="16.31" fill="#aed1e7"/><rect x="168.19" y="144.09" width="8.71" height="16.31" fill="#aed1e7"/><rect x="176.60" y="0.00" width="8.71" height="16.31" fill="#abcfe6"/><rect x="176.60" y="16.01" width="8.71" height="16.31" fill="#abcfe6"/><rect x="176.60" y="32.02" width="8.71" height="16.31" fill="#abcfe6"/><rect x="176.60" y="48.03" width="8.71" height="16.31" fill="#abcfe6"/><rect x="176.60" y="64.04" width="8.71" height="16.31" fill="#aacfe6"/><rect x="176.60" y="80.05" width="8.71" height="16.31" fill="#aacfe6"/><rect x="176.60" y="96.06" width="8.71" height="16.31" fill="#aacfe6"/><rect x="176.60" y="112.07" width="8.71" height="16.31" fill="#aacfe6"/><rect x="176.60" y="128.08" width="8.71" height="16.31" fill="#a9cfe5"/><rect x="176.60" y="144.09" width="8.71" height="16.31" fill="#a9cfe5"/><rect x="185.01" y="0.00" width="8.71" height="16.31" fill="#95c4e0"/><rect x="185.01" y="16.01" width="8.71" height="16.31" fill="#95c4e0"/><rect x="185.01" y="32.02" width="8.71" height="16.31" fill="#95c4e0"/><rect x="185.01" y="48.03" width="8.71" height="16.31" fill="#95c4e0"/><rect x="185.01" y="64.04" width="8.71" height="16.31" fill="#95c4e0"/><rect x="185.01" y="80.05" width="8.71" height="16.31" fill="#95c4e0"/><rect x="185.01" y="96.06" width="8.71" height="16.31" fill="#94c4e0"/><rect x="185.01" y="112.07" width="8.71" height="16.31" fill="#94c4e0"/><rect x="185.01" y="128.08" width="8.71" height="16.31" fill="#94c4df"/><rect x="185.01" y="144.09" width="8.71" height="16.31" fill="#94c4df"/><rect x="193.42" y="0.00" width="8.71" height="16.31" fill="#b3d3e8"/><rect x="193.42" y="16.01" width="8.71" height="16.31" fill="#b3d3e8"/><rect x="193.42" y="32.02" width="8.71" height="16.31" fill="#b2d3e8"/><rect x="193.42" y="48.03" width="8.71" height="16.31" fill="#b2d3e8"/><rect x="193.42" y="64.04" width="8.71" height="16.31" fill="#b2d3e8"/><rect x="193.42" y="80.05" width="8.71" height="16.31" fill="#b2d2e8"/><rect x="193.42" y="96.06" width="8.71" height="16.31" fill="#b2d2e8"/><rect x="193.42" y="112.07" width="8.71" height="16.31" fill="#b1d2e8"/><rect x="193.42" y="128.08" width="8.71" height="16.31" fill="#b1d2e8"/><rect x="193.42" y="144.09" width="8.71" height="16.31" fill="#b1d2e8"/><rect x="201.83" y="0.00" width="8.71" height="16.31" fill="#c1daed"/><rect x="201.83" y="16.01" width="8.71" height="16.31" fill="#c1daed"/><rect x="201.83" y="32.02" width="8.71" height="16.31" fill="#c1daed"/><rect x="201.83" y="48.03" width="8.71" height="16.31" fill="#c1daed"/><rect x="201.83" y="64.04" width="8.71" height="16.31" fill="#c1daed"/><rect x="201.83" y="80.05" width="8.71" height="16.31" fill="#c1daed"/><rect x="201.83" y="96.06" width="8.71" height="16.31" fill="#c1daed"/><rect x="201.83" y="112.07" width="8.71" height="16.31" fill="#c1daed"/><rect x="201.83" y="128.08" width="8.71" height="16.31" fill="#c1daed"/><rect x="201.83" y="144.09" width="8.71" height="16.31" fill="#c1daed"/><rect x="210.24" y="0.00" width="8.71" height="16.31" fill="#afd1e7"/><rect x="210.24" y="16.01" width="8.71" height="16.31" fill="#afd1e7"/><rect x="210.24" y="32.02" width="8.71" height="16.31" fill="#aed1e7"/><rect x="210.24" y="48.03" width="8.71" height="16.31" fill="#aed1e7"/><rect x="210.24" y="64.04" width="8.71" height="16.31" fill="#aed1e7"/><rect x="210.24" y="80.05" width="8.71" height="16.31" fill="#aed1e7"/><rect x="210.24" y="96.06" width="8.71" height="16.31" fill="#aed1e7"/><rect x="210.24" y="112.07" width="8.71" height="16.31" fill="#aed1e7"/><rect x="210.24" y="128.08" width="8.71" height="16.31" fill="#aed1e7"/><rect x="210.24" y="144.09" width="8.71" height="16.31" fill="#aed1e7"/><rect x="218.65" y="0.00" width="8.71" height="16.31" fill="#ccdff1"/><rect x="218.65" y="16.01" width="8.71" height="16.31" fill="#ccdff1"/><rect x="218.65" y="32.02" width="8.71" height="16.31" fill="#ccdff1"/><rect x="218.65" y="48.03" width="8.71" height="16.31" fill="#ccdff1"/><rect x="218.65" y="64.04" width="8.71" height="16.31" fill="#ccdff1"/><rect x="218.65" y="80.05" width="8.71" height="16.31" fill="#ccdff1"/><rect x="218.65" y="96.06" width="8.71" height="16.31" fill="#ccdff1"/><rect x="218.65" y="112.07" width="8.71" height="16.31" fill="#ccdff1"/><rect x="218.65" y="128.08" width="8.71" height="16.31" fill="#ccdff1"/><rect x="218.65" y="144.09" width="8.71" height="16.31" fill="#ccdff1"/><rect x="227.06" y="0.00" width="8.71" height="16.31" fill="#c7ddef"/><rect x="227.06" y="16.01" width="8.71" height="16.31" fill="#c7ddef"/><rect x="227.06" y="32.02" width="8.71" height="16.31" fill="#c7ddef"/><rect x="227.06" y="48.03" width="8.71" height="16.31" fill="#c7ddef"/><rect x="227.06" y="64.04" width="8.71" height="16.31" fill="#c7ddef"/><rect x="227.06" y="80.05" width="8.71" height="16.31" fill="#c7ddef"/><rect x="227.06" y="96.06" width="8.71" height="16.31" fill="#c7ddef"/><rect x="227.06" y="112.07" width="8.71" height="16.31" fill="#c7ddef"/><rect x="227.06" y="128.08" width="8.71" height="16.31" fill="#c7ddef"/><rect x="227.06" y="144.09" width="8.71" height="16.31" fill="#c7ddef"/><rect x="235.47" y="0.00" width="8.71" height="16.31" fill="#c3daee"/><rect x="235.47" y="16.01" width="8.71" height="16.31" fill="#c2daee"/><rect x="235.47" y="32.02" width="8.71" height="16.31" fill="#c2daed"/><rect x="235.47" y="48.03" width="8.71" height="16.31" fill="#c2daed"/><rect x="235.47" y="64.04" width="8.71" height="16.31" fill="#c2daed"/><rect x="235.47" y="80.05" width="8.71" height="16.31" fill="#c1daed"/><rect x="235.47" y="96.06" width="8.71" height="16.31" fill="#c1daed"/><rect x="235.47" y="112.07" width="8.71" height="16.31" fill="#c1daed"/><rect x="235.47" y="128.08" width="8.71" height="16.31" fill="#c1d9ed"/><rect x="235.47" y="144.09" width="8.71" height="16.31" fill="#c1d9ed"/><rect x="243.88" y="0.00" width="8.71" height="16.31" fill="#cadef0"/><rect x="243.88" y="16.01" width="8.71" height="16.31" fill="#cadef0"/><rect x="243.88" y="32.02" width="8.71" height="16.31" fill="#cadef0"/><rect x="243.88" y="48.03" width="8.71" height="16.31" fill="#cadef0"/><rect x="243.88" y="64.04" width="8.71" height="16.31" fill="#cadef0"/><rect x="243.88" y="80.05" width="8.71" height="16.31" fill="#cadef0"/><rect x="243.88" y="96.06" width="8.71" height="16.31" fill="#cadef0"/><rect x="243.88" y="112.07" width="8.71" height="16.31" fill="#cadef0"/><rect x="243.88" y="128.08" width="8.71" height="16.31" fill="#cadef0"/><rect x="243.88" y="144.09" width="8.71" height="16.31" fill="#cadef0"/><rect x="252.29" y="0.00" width="8.71" height="16.31" fill="#9cc8e2"/><rect x="252.29" y="16.01" width="8.71" height="16.31" fill="#9cc8e2"/><rect x="252.29" y="32.02" width="8.71" height="16.31" fill="#9cc8e2"/><rect x="252.29" y="48.03" width="8.71" height="16.31" fill="#9cc8e2"/><rect x="252.29" y="64.04" width="8.71" height="16.31" fill="#9cc8e2"/><rect x="252.29" y="80.05" width="8.71" height="16.31" fill="#9cc8e2"/><rect x="252.29" y="96.06" width="8.71" height="16.31" fill="#9cc8e2"/><rect x="252.29" y="112.07" width="8.71" height="16.31" fill="#9cc8e2"/><rect x="252.29" y="128.08" width="8.71" height="16.31" fill="#9cc8e2"/><rect x="252.29" y="144.09" width="8.71" height="16.31" fill="#9cc8e2"/><rect x="260.70" y="0.00" width="8.71" height="16.31" fill="#c6dcef"/><rect x="260.70" y="16.01" width="8.71" height="16.31" fill="#c6dcef"/><rect x="260.70" y="32.02" width="8.71" height="16.31" fill="#c6dcef"/><rect x="260.70" y="48.03" width="8.71" height="16.31" fill="#c6dcef"/><rect x="260.70" y="64.04" width="8.71" height="16.31" fill="#c6dcef"/><rect x="260.70" y="80.05" width="8.71" height="16.31" fill="#c6dcef"/><rect x="260.70" y="96.06" width="8.71" height="16.31" fill="#c6dcef"/><rect x="260.70" y="112.07" width="8.71" height="16.31" fill="#c6dcef"/><rect x="260.70" y="128.08" width="8.71" height="16.31" fill="#c6dcef"/><rect x="260.70" y="144.09" width="8.71" height="16.31" fill="#c6dcef"/><rect x="269.11" y="0.00" width="8.71" height="16.31" fill="#4a91c6"/><rect x="269.11" y="16.01" width="8.71" height="16.31" fill="#4a91c6"/><rect x="269.11" y="32.02" width="8.71" height="16.31" fill="#4a91c6"/><rect x="269.11" y="48.03" width="8.71" height="16.31" fill="#4a91c6"/><rect x="269.11" y="64.04" width="8.71" height="16.31" fill="#4a91c6"/><rect x="269.11" y="80.05" width="8.71" height="16.31" fill="#4a91c6"/><rect x="269.11" y="96.06" width="8.71" height="16.31" fill="#4a91c6"/><rect x="269.11" y="112.07" width="8.71" height="16.31" fill="#4a91c6"/><rect x="269.11" y="128.08" width="8.71" height="16.31" fill="#4a91c6"/><rect x="269.11" y="144.09" width="8.71" height="16.31" fill="#4a91c6"/><rect x="277.52" y="0.00" width="8.71" height="16.31" fill="#97c5e0"/><rect x="277.52" y="16.01" width="8.71" height="16.31" fill="#97c5e0"/><rect x="277.52" y="32.02" width="8.71" height="16.31" fill="#96c5e0"/><rect x="277.52" y="48.03" width="8.71" height="16.31" fill="#95c4e0"/><rect x="277.52" y="64.04" width="8.71" height="16.31" fill="#94c4e0"/><rect x="277.52" y="80.05" width="8.71" height="16.31" fill="#94c3df"/><rect x="277.52" y="96.06" width="8.71" height="16.31" fill="#93c3df"/><rect x="277.52" y="112.07" width="8.71" height="16.31" fill="#92c3df"/><rect x="277.52" y="128.08" width="8.71" height="16.31" fill="#92c2df"/><rect x="277.52" y="144.09" width="8.71" height="16.31" fill="#91c2df"/><rect x="285.93" y="0.00" width="8.71" height="16.31" fill="#cee1f2"/><rect x="285.93" y="16.01" width="8.71" height="16.31" fill="#cee1f2"/><rect x="285.93" y="32.02" width="8.71" height="16.31" fill="#cee0f2"/><rect x="285.93" y="48.03" width="8.71" height="16.31" fill="#cee0f2"/><rect x="285.93" y="64.04" width="8.71" height="16.31" fill="#cee0f2"/><rect x="285.93" y="80.05" width="8.71" height="16.31" fill="#cee0f2"/><rect x="285.93" y="96.06" width="8.71" height="16.31" fill="#cee0f2"/><rect x="285.93" y="112.07" width="8.71" height="16.31" fill="#cee0f2"/><rect x="285.93" y="128.08" width="8.71" height="16.31" fill="#cee0f2"/><rect x="285.93" y="144.09" width="8.71" height="16.31" fill="#cee0f1"/><rect x="294.34" y="0.00" width="8.71" height="16.31" fill="#8abedd"/><rect x="294.34" y="16.01" width="8.71" height="16.31" fill="#89bedd"/><rect x="294.34" y="32.02" width="8.71" height="16.31" fill="#89bedd"/><rect x="294.34" y="48.03" width="8.71" height="16.31" fill="#89bedd"/><rect x="294.34" y="64.04" width="8.71" height="16.31" fill="#89bedc"/><rect x="294.34" y="80.05" width="8.71" height="16.31" fill="#89bedc"/><rect x="294.34" y="96.06" width="8.71" height="16.31" fill="#89bedc"/><rect x="294.34" y="112.07" width="8.71" height="16.31" fill="#89bedc"/><rect x="294.34" y="128.08" width="8.71" height="16.31" fill="#89bddc"/><rect x="294.34" y="144.09" width="8.71" height="16.31" fill="#89bddc"/><rect x="302.75" y="0.00" width="8.71" height="16.31" fill="#bdd7ec"/><rect x="302.75" y="16.01" width="8.71" height="16.31" fill="#bdd7ec"/><rect x="302.75" y="32.02" width="8.71" height="16.31" fill="#bdd7ec"/><rect x="302.75" y="48.03" width="8.71" height="16.31" fill="#bcd7eb"/><rect x="302.75" y="64.04" width="8.71" height="16.31" fill="#bcd7eb"/><rect x="302.75" y="80.05" width="8.71" height="16.31" fill="#bcd7eb"/><rect x="302.75" y="96.06" width="8.71" height="16.31" fill="#bcd7eb"/><rect x="302.75" y="112.07" width="8.71" height="16.31" fill="#bcd7eb"/><rect x="302.75" y="128.08" width="8.71" height="16.31" fill="#bcd7eb"/><rect x="302.75" y="144.09" width="8.71" height="16.31" fill="#bbd7eb"/><rect x="311.16" y="0.00" width="8.71" height="16.31" fill="#bcd7eb"/><rect x="311.16" y="16.01" width="8.71" height="16.31" fill="#bcd7eb"/><rect x="311.16" y="32.02" width="8.71" height="16.31" fill="#bcd7eb"/><rect x="311.16" y="48.03" width="8.71" height="16.31" fill="#bbd7eb"/><rect x="311.16" y="64.04" width="8.71" height="16.31" fill="#bbd7eb"/><rect x="311.16" y="80.05" width="8.71" height="16.31" fill="#bbd7eb"/><rect x="311.16" y="96.06" width="8.71" height="16.31" fill="#bbd6eb"/><rect x="311.16" y="112.07" width="8.71" height="16.31" fill="#bad6eb"/><rect x="311.16" y="128.08" width="8.71" height="16.31" fill="#bad6eb"/><rect x="311.16" y="144.09" width="8.71" height="16.31" fill="#bad6eb"/><rect x="319.57" y="0.00" width="8.71" height="16.31" fill="#81b9da"/><rect x="319.57" y="16.01" width="8.71" height="16.31" fill="#81b9da"/><rect x="319.57" y="32.02" width="8.71" height="16.31" fill="#81b9da"/><rect x="319.57" y="48.03" width="8.71" height="16.31" fill="#81b9da"/><rect x="319.57" y="64.04" width="8.71" height="16.31" fill="#81b9da"/><rect x="319.57" y="80.05" width="8.71" height="16.31" fill="#81b9da"/><rect x="319.57" y="96.06" width="8.71" height="16.31" fill="#81b9da"/><rect x="319.57" y="112.07" width="8.71" height="16.31" fill="#81b9da"/><rect x="319.57" y="128.08" width="8.71" height="16.31" fill="#81b9da"/><rect x="319.57" y="144.09" width="8.71" height="16.31" fill="#81b9da"/><rect x="327.98" y="0.00" width="8.71" height="16.31" fill="#bdd8ec"/><rect x="327.98" y="16.01" width="8.71" height="16.31" fill="#bdd8ec"/><rect x="327.98" y="32.02" width="8.71" height="16.31" fill="#bed8ec"/><rect x="327.98" y="48.03" width="8.71" height="16.31" fill="#bed8ec"/><rect x="327.98" y="64.04" width="8.71" height="16.31" fill="#bed8ec"/><rect x="327.98" y="80.05" width="8.71" height="16.31" fill="#bfd8ec"/><rect x="327.98" y="96.06" width="8.71" height="16.31" fill="#bfd9ec"/><rect x="327.98" y="112.07" width="8.71" height="16.31" fill="#bfd9ec"/><rect x="327.98" y="128.08" width="8.71" height="16.31" fill="#c0d9ed"/><rect x="327.98" y="144.09" width="8.71" height="16.31" fill="#c0d9ed"/><rect x="336.38" y="0.00" width="8.71" height="16.31" fill="#ccdff1"/><rect x="336.38" y="16.01" width="8.71" height="16.31" fill="#ccdff1"/><rect x="336.38" y="32.02" width="8.71" height="16.31" fill="#ccdff1"/><rect x="336.38" y="48.03" width="8.71" height="16.31" fill="#ccdff1"/><rect x="336.38" y="64.04" width="8.71" height="16.31" fill="#ccdff1"/><rect x="336.38" y="80.05" width="8.71" height="16.31" fill="#ccdff1"/><rect x="336.38" y="96.06" width="8.71" height="16.31" fill="#ccdff1"/><rect x="336.38" y="112.07" width="8.71" height="16.31" fill="#ccdff1"/><rect x="336.38" y="128.08" width="8.71" height="16.31" fill="#ccdff1"/><rect x="336.38" y="144.09" width="8.71" height="16.31" fill="#ccdff1"/><rect x="344.79" y="0.00" width="8.71" height="16.31" fill="#b7d5ea"/><rect x="344.79" y="16.01" width="8.71" height="16.31" fill="#b7d5ea"/><rect x="344.79" y="32.02" width="8.71" height="16.31" fill="#b6d5ea"/><rect x="344.79" y="48.03" width="8.71" height="16.31" fill="#b6d4e9"/><rect x="344.79" y="64.04" width="8.71" height="16.31" fill="#b6d4e9"/><rect x="344.79" y="80.05" width="8.71" height="16.31" fill="#b5d4e9"/><rect x="344.79" y="96.06" width="8.71" height="16.31" fill="#b5d4e9"/><rect x="344.79" y="112.07" width="8.71" height="16.31" fill="#b5d4e9"/><rect x="344.79" y="128.08" width="8.71" height="16.31" fill="#b4d4e9"/><rect x="344.79" y="144.09" width="8.71" height="16.31" fill="#b4d3e9"/><rect x="353.20" y="0.00" width="8.71" height="16.31" fill="#cde0f1"/><rect x="353.20" y="16.01" width="8.71" height="16.31" fill="#cde0f1"/><rect x="353.20" y="32.02" width="8.71" height="16.31" fill="#cde0f1"/><rect x="353.20" y="48.03" width="8.71" height="16.31" fill="#cde0f1"/><rect x="353.20" y="64.04" width="8.71" height="16.31" fill="#cde0f1"/><rect x="353.20" y="80.05" width="8.71" height="16.31" fill="#cde0f1"/><rect x="353.20" y="96.06" width="8.71" height="16.31" fill="#cde0f1"/><rect x="353.20" y="112.07" width="8.71" height="16.31" fill="#cde0f1"/><rect x="353.20" y="128.08" width="8.71" height="16.31" fill="#cde0f1"/><rect x="353.20" y="144.09" width="8.71" height="16.31" fill="#cde0f1"/><rect x="361.61" y="0.00" width="8.71" height="16.31" fill="#acd0e6"/><rect x="361.61" y="16.01" width="8.71" height="16.31" fill="#acd0e6"/><rect x="361.61" y="32.02" width="8.71" height="16.31" fill="#acd0e6"/><rect x="361.61" y="48.03" width="8.71" height="16.31" fill="#abd0e6"/><rect x="361.61" y="64.04" width="8.71" height="16.31" fill="#abcfe6"/><rect x="361.61" y="80.05" width="8.71" height="16.31" fill="#abcfe6"/><rect x="361.61" y="96.06" width="8.71" height="16.31" fill="#aacfe6"/><rect x="361.61" y="112.07" width="8.71" height="16.31" fill="#aacfe6"/><rect x="361.61" y="128.08" width="8.71" height="16.31" fill="#aacfe6"/><rect x="361.61" y="144.09" width="8.71" height="16.31" fill="#a9cfe5"/><rect x="370.02" y="0.00" width="8.71" height="16.31" fill="#4690c6"/><rect x="370.02" y="16.01" width="8.71" height="16.31" fill="#4690c6"/><rect x="370.02" y="32.02" width="8.71" height="16.31" fill="#4690c6"/><rect x="370.02" y="48.03" width="8.71" height="16.31" fill="#2368ad"/><rect x="370.02" y="64.04" width="8.71" height="16.31" fill="#2368ad"/><rect x="370.02" y="80.05" width="8.71" height="16.31" fill="#2368ad"/><rect x="370.02" y="96.06" width="8.71" height="16.31" fill="#2368ad"/><rect x="370.02" y="112.07" width="8.71" height="16.31" fill="#2368ad"/><rect x="370.02" y="128.08" width="8.71" height="16.31" fill="#2368ad"/><rect x="370.02" y="144.09" width="8.71" height="16.31" fill="#2368ad"/><rect x="378.43" y="0.00" width="8.71" height="16.31" fill="#c2daed"/><rect x="378.43" y="16.01" width="8.71" height="16.31" fill="#c2daed"/><rect x="378.43" y="32.02" width="8.71" height="16.31" fill="#c2daed"/><rect x="378.43" y="48.03" width="8.71" height="16.31" fill="#c1daed"/><rect x="378.43" y="64.04" width="8.71" height="16.31" fill="#c1daed"/><rect x="378.43" y="80.05" width="8.71" height="16.31" fill="#c1daed"/><rect x="378.43" y="96.06" width="8.71" height="16.31" fill="#c1d9ed"/><rect x="378.43" y="112.07" width="8.71" height="16.31" fill="#c0d9ed"/><rect x="378.43" y="128.08" width="8.71" height="16.31" fill="#c0d9ed"/><rect x="378.43" y="144.09" width="8.71" height="16.31" fill="#c0d9ed"/><rect x="386.84" y="0.00" width="8.71" height="16.31" fill="#cee1f2"/><rect x="386.84" y="16.01" width="8.71" height="16.31" fill="#cee1f2"/><rect x="386.84" y="32.02" width="8.71" height="16.31" fill="#cee1f2"/><rect x="386.84" y="48.03" width="8.71" height="16.31" fill="#cee1f2"/><rect x="386.84" y="64.04" width="8.71" height="16.31" fill="#cee1f2"/><rect x="386.84" y="80.05" width="8.71" height="16.31" fill="#cee1f2"/><rect x="386.84" y="96.06" width="8.71" height="16.31" fill="#cee1f2"/><rect x="386.84" y="112.07" width="8.71" height="16.31" fill="#cee1f2"/><rect x="386.84" y="128.08" width="8.71" height="16.31" fill="#cee1f2"/><rect x="386.84" y="144.09" width="8.71" height="16.31" fill="#cee1f2"/><rect x="395.25" y="0.00" width="8.71" height="16.31" fill="#a2cbe3"/><rect x="395.25" y="16.01" width="8.71" height="16.31" fill="#a1cae3"/><rect x="395.25" y="32.02" width="8.71" height="16.31" fill="#a1cae3"/><rect x="395.25" y="48.03" width="8.71" height="16.31" fill="#a0cae3"/><rect x="395.25" y="64.04" width="8.71" height="16.31" fill="#a0cae3"/><rect x="395.25" y="80.05" width="8.71" height="16.31" fill="#a0cae3"/><rect x="395.25" y="96.06" width="8.71" height="16.31" fill="#9fc9e3"/><rect x="395.25" y="112.07" width="8.71" height="16.31" fill="#9fc9e2"/><rect x="395.25" y="128.08" width="8.71" height="16.31" fill="#9ec9e2"/><rect x="395.25" y="144.09" width="8.71" height="16.31" fill="#9ec9e2"/><rect x="403.66" y="0.00" width="8.71" height="16.31" fill="#aacfe6"/><rect x="403.66" y="16.01" width="8.71" height="16.31" fill="#aacfe5"/><rect x="403.66" y="32.02" width="8.71" height="16.31" fill="#a9cee5"/><rect x="403.66" y="48.03" width="8.71" height="16.31" fill="#a8cee5"/><rect x="403.66" y="64.04" width="8.71" height="16.31" fill="#a8cee5"/><rect x="403.66" y="80.05" width="8.71" height="16.31" fill="#a7cde5"/><rect x="403.66" y="96.06" width="8.71" height="16.31" fill="#a6cde5"/><rect x="403.66" y="112.07" width="8.71" height="16.31" fill="#a6cde4"/><rect x="403.66" y="128.08" width="8.71" height="16.31" fill="#a5cce4"/><rect x="403.66" y="144.09" width="8.71" height="16.31" fill="#a4cce4"/><rect x="412.07" y="0.00" width="8.71" height="16.31" fill="#c7ddef"/><rect x="412.07" y="16.01" width="8.71" height="16.31" fill="#c7ddef"/><rect x="412.07" y="32.02" width="8.71" height="16.31" fill="#c7ddef"/><rect x="412.07" y="48.03" width="8.71" height="16.31" fill="#c7ddef"/><rect x="412.07" y="64.04" width="8.71" height="16.31" fill="#c7ddef"/><rect x="412.07" y="80.05" width="8.71" height="16.31" fill="#c7ddef"/><rect x="412.07" y="96.06" width="8.71" height="16.31" fill="#c7ddef"/><rect x="412.07" y="112.07" width="8.71" height="16.31" fill="#c7ddef"/><rect x="412.07" y="128.08" width="8.71" height="16.31" fill="#c7ddef"/><rect x="412.07" y="144.09" width="8.71" height="16.31" fill="#c7ddef"/><rect x="420.48" y="0.00" width="8.71" height="16.31" fill="#b1d2e8"/><rect x="420.48" y="16.01" width="8.71" height="16.31" fill="#b0d2e8"/><rect x="420.48" y="32.02" width="8.71" height="16.31" fill="#b0d2e8"/><rect x="420.48" y="48.03" width="8.71" height="16.31" fill="#b0d2e8"/><rect x="420.48" y="64.04" width="8.71" height="16.31" fill="#b0d2e8"/><rect x="420.48" y="80.05" width="8.71" height="16.31" fill="#b0d2e8"/><rect x="420.48" y="96.06" width="8.71" height="16.31" fill="#b0d2e8"/><rect x="420.48" y="112.07" width="8.71" height="16.31" fill="#b0d2e8"/><rect x="420.48" y="128.08" width="8.71" height="16.31" fill="#b0d2e7"/><rect x="420.48" y="144.09" width="8.71" height="16.31" fill="#b0d2e7"/><rect x="428.89" y="0.00" width="8.71" height="16.31" fill="#cfe1f2"/><rect x="428.89" y="16.01" width="8.71" height="16.31" fill="#cfe1f2"/><rect x="428.89" y="32.02" width="8.71" height="16.31" fill="#cfe1f2"/><rect x="428.89" y="48.03" width="8.71" height="16.31" fill="#cfe1f2"/><rect x="428.89" y="64.04" width="8.71" height="16.31" fill="#cfe1f2"/><rect x="428.89" y="80.05" width="8.71" height="16.31" fill="#cfe1f2"/><rect x="428.89" y="96.06" width="8.71" height="16.31" fill="#cfe1f2"/><rect x="428.89" y="112.07" width="8.71" height="16.31" fill="#cfe1f2"/><rect x="428.89" y="128.08" width="8.71" height="16.31" fill="#cfe1f2"/><rect x="428.89" y="144.09" width="8.71" height="16.31" fill="#cfe1f2"/><rect x="8.40" y="0" width="1" height="160.10" fill="rgba(30,40,55,0.3)"/><rect x="16.40" y="0" width="1" height="160.10" fill="rgba(30,40,55,0.3)"/><rect x="25.40" y="0" width="1" height="160.10" fill="rgba(30,40,55,0.3)"/><rect x="33.40" y="0" width="1" height="160.10" fill="rgba(30,40,55,0.3)"/><rect x="42.40" y="0" width="1" height="160.10" fill="rgba(30,40,55,0.3)"/><rect x="50.40" y="0" width="1" height="160.10" fill="rgba(30,40,55,0.3)"/><rect x="58.40" y="0" width="1" height="160.10" fill="rgba(30,40,55,0.3)"/><rect x="67.40" y="0" width="1" height="160.10" fill="rgba(30,40,55,0.3)"/><rect x="75.40" y="0" width="1" height="160.10" fill="rgba(30,40,55,0.3)"/><rect x="84.40" y="0" width="1" height="160.10" fill="rgba(30,40,55,0.3)"/><rect x="92.40" y="0" width="1" height="160.10" fill="rgba(30,40,55,0.3)"/><rect x="101.40" y="0" width="1" height="160.10" fill="rgba(30,40,55,0.3)"/><rect x="109.40" y="0" width="1" height="160.10" fill="rgba(30,40,55,0.3)"/><rect x="117.40" y="0" width="1" height="160.10" fill="rgba(30,40,55,0.3)"/><rect x="126.40" y="0" width="1" height="160.10" fill="rgba(30,40,55,0.3)"/><rect x="134.40" y="0" width="1" height="160.10" fill="rgba(30,40,55,0.3)"/><rect x="143.40" y="0" width="1" height="160.10" fill="rgba(30,40,55,0.3)"/><rect x="151.40" y="0" width="1" height="160.10" fill="rgba(30,40,55,0.3)"/><rect x="159.40" y="0" width="1" height="160.10" fill="rgba(30,40,55,0.3)"/><rect x="168.40" y="0" width="1" height="160.10" fill="rgba(30,40,55,0.3)"/><rect x="176.40" y="0" width="1" height="160.10" fill="rgba(30,40,55,0.3)"/><rect x="185.40" y="0" width="1" height="160.10" fill="rgba(30,40,55,0.3)"/><rect x="193.40" y="0" width="1" height="160.10" fill="rgba(30,40,55,0.3)"/><rect x="201.40" y="0" width="1" height="160.10" fill="rgba(30,40,55,0.3)"/><rect x="210.40" y="0" width="1" height="160.10" fill="rgba(30,40,55,0.3)"/><rect x="218.40" y="0" width="1" height="160.10" fill="rgba(30,40,55,0.3)"/><rect x="227.40" y="0" width="1" height="160.10" fill="rgba(30,40,55,0.3)"/><rect x="235.40" y="0" width="1" height="160.10" fill="rgba(30,40,55,0.3)"/><rect x="243.40" y="0" width="1" height="160.10" fill="rgba(30,40,55,0.3)"/><rect x="252.40" y="0" width="1" height="160.10" fill="rgba(30,40,55,0.3)"/><rect x="260.40" y="0" width="1" height="160.10" fill="rgba(30,40,55,0.3)"/><rect x="269.40" y="0" width="1" height="160.10" fill="rgba(30,40,55,0.3)"/><rect x="277.40" y="0" width="1" height="160.10" fill="rgba(30,40,55,0.3)"/><rect x="286.40" y="0" width="1" height="160.10" fill="rgba(30,40,55,0.3)"/><rect x="294.40" y="0" width="1" height="160.10" fill="rgba(30,40,55,0.3)"/><rect x="302.40" y="0" width="1" height="160.10" fill="rgba(30,40,55,0.3)"/><rect x="311.40" y="0" width="1" height="160.10" fill="rgba(30,40,55,0.3)"/><rect x="319.40" y="0" width="1" height="160.10" fill="rgba(30,40,55,0.3)"/><rect x="328.40" y="0" width="1" height="160.10" fill="rgba(30,40,55,0.3)"/><rect x="336.40" y="0" width="1" height="160.10" fill="rgba(30,40,55,0.3)"/><rect x="344.40" y="0" width="1" height="160.10" fill="rgba(30,40,55,0.3)"/><rect x="353.40" y="0" width="1" height="160.10" fill="rgba(30,40,55,0.3)"/><rect x="361.40" y="0" width="1" height="160.10" fill="rgba(30,40,55,0.3)"/><rect x="370.40" y="0" width="1" height="160.10" fill="rgba(30,40,55,0.3)"/><rect x="378.40" y="0" width="1" height="160.10" fill="rgba(30,40,55,0.3)"/><rect x="386.40" y="0" width="1" height="160.10" fill="rgba(30,40,55,0.3)"/><rect x="395.40" y="0" width="1" height="160.10" fill="rgba(30,40,55,0.3)"/><rect x="403.40" y="0" width="1" height="160.10" fill="rgba(30,40,55,0.3)"/><rect x="412.40" y="0" width="1" height="160.10" fill="rgba(30,40,55,0.3)"/><rect x="420.40" y="0" width="1" height="160.10" fill="rgba(30,40,55,0.3)"/><rect x="428.40" y="0" width="1" height="160.10" fill="rgba(30,40,55,0.3)"/><rect x="0" y="15.50" width="437.30" height="1" fill="rgba(30,40,55,0.3)"/><rect x="0" y="31.50" width="437.30" height="1" fill="rgba(30,40,55,0.3)"/><rect x="0" y="47.50" width="437.30" height="1" fill="rgba(30,40,55,0.3)"/><rect x="0" y="63.50" width="437.30" height="1" fill="rgba(30,40,55,0.3)"/><rect x="0" y="79.50" width="437.30" height="1" fill="rgba(30,40,55,0.3)"/><rect x="0" y="95.50" width="437.30" height="1" fill="rgba(30,40,55,0.3)"/><rect x="0" y="111.50" width="437.30" height="1" fill="rgba(30,40,55,0.3)"/><rect x="0" y="127.50" width="437.30" height="1" fill="rgba(30,40,55,0.3)"/><rect x="0" y="143.50" width="437.30" height="1" fill="rgba(30,40,55,0.3)"/></svg>
<div class="t" style="left:565.30px;top:508.10px;font-size:9.61px;color:#fafafa;transform:scaleX(0.8937);">2010</div>
<div class="t" style="left:565.30px;top:521.10px;font-size:9.61px;color:#fafafa;transform:scaleX(0.9248);">2011</div>
<div class="t" style="left:565.30px;top:537.00px;font-size:9.61px;color:#fafafa;transform:scaleX(0.8937);">2012</div>
<div class="t" style="left:565.30px;top:553.00px;font-size:9.61px;color:#fafafa;transform:scaleX(0.8937);">2013</div>
<div class="t" style="left:565.30px;top:569.00px;font-size:9.61px;color:#fafafa;transform:scaleX(0.8937);">2014</div>
<div class="t" style="left:565.30px;top:585.00px;font-size:9.61px;color:#fafafa;transform:scaleX(0.8937);">2015</div>
<div class="t" style="left:565.30px;top:601.00px;font-size:9.61px;color:#fafafa;transform:scaleX(0.8937);">2016</div>
<div class="t" style="left:565.30px;top:617.00px;font-size:9.61px;color:#fafafa;transform:scaleX(0.8937);">2017</div>
<div class="t" style="left:565.30px;top:633.00px;font-size:9.61px;color:#fafafa;transform:scaleX(0.8937);">2018</div>
<div class="t" style="left:565.30px;top:649.00px;font-size:9.61px;color:#fafafa;transform:scaleX(0.8937);">2019</div>
<div style="position:absolute;left:550.30px;top:595.80px;transform:rotate(-90deg);transform-origin:0 0"><div class="t" style="left:-0.00px;top:-12.00px;font-size:14.98px;color:#fafafa;font-weight:bold;-webkit-text-stroke:0;transform:scaleX(0.8847)">Year</div></div>
<div style="position:absolute;left:604.70px;top:710.63px;transform:rotate(-90deg);transform-origin:0 0"><div class="t" style="left:-0.00px;top:-8.00px;font-size:10.47px;color:#fafafa;transform:scaleX(0.8764)">Alabama</div></div>
<div style="position:absolute;left:621.52px;top:705.54px;transform:rotate(-90deg);transform-origin:0 0"><div class="t" style="left:-0.00px;top:-8.00px;font-size:10.47px;color:#fafafa;transform:scaleX(0.8764)">Arizona</div></div>
<div style="position:absolute;left:638.34px;top:713.18px;transform:rotate(-90deg);transform-origin:0 0"><div class="t" style="left:-0.00px;top:-8.00px;font-size:10.47px;color:#fafafa;transform:scaleX(0.8764)">California</div></div>
<div style="position:absolute;left:655.16px;top:722.86px;transform:rotate(-90deg);transform-origin:0 0"><div class="t" style="left:-0.00px;top:-8.00px;font-size:10.47px;color:#fafafa;transform:scaleX(0.8764)">Connecticut</div></div>
<div style="position:absolute;left:671.98px;top:753.97px;transform:rotate(-90deg);transform-origin:0 0"><div class="t" style="left:-0.00px;top:-8.00px;font-size:10.47px;color:#fafafa;transform:scaleX(0.8764)">District of Columbia</div></div>
<div style="position:absolute;left:688.80px;top:707.07px;transform:rotate(-90deg);transform-origin:0 0"><div class="t" style="left:-0.00px;top:-8.00px;font-size:10.47px;color:#fafafa;transform:scaleX(0.8764)">Georgia</div></div>
<div style="position:absolute;left:705.62px;top:697.37px;transform:rotate(-90deg);transform-origin:0 0"><div class="t" style="left:-0.00px;top:-8.00px;font-size:10.47px;color:#fafafa;transform:scaleX(0.8764)">Idaho</div></div>
<div style="position:absolute;left:722.44px;top:704.53px;transform:rotate(-90deg);transform-origin:0 0"><div class="t" style="left:-0.00px;top:-8.00px;font-size:10.47px;color:#fafafa;transform:scaleX(0.8764)">Indiana</div></div>
<div style="position:absolute;left:739.26px;top:705.01px;transform:rotate(-90deg);transform-origin:0 0"><div class="t" style="left:-0.00px;top:-8.00px;font-size:10.47px;color:#fafafa;transform:scaleX(0.8764)">Kansas</div></div>
<div style="position:absolute;left:756.08px;top:713.70px;transform:rotate(-90deg);transform-origin:0 0"><div class="t" style="left:-0.00px;top:-8.00px;font-size:10.47px;color:#fafafa;transform:scaleX(0.8764)">Louisiana</div></div>
<div style="position:absolute;left:772.90px;top:712.14px;transform:rotate(-90deg);transform-origin:0 0"><div class="t" style="left:-0.00px;top:-8.00px;font-size:10.47px;color:#fafafa;transform:scaleX(0.8764)">Maryland</div></div>
<div style="position:absolute;left:789.72px;top:711.13px;transform:rotate(-90deg);transform-origin:0 0"><div class="t" style="left:-0.00px;top:-8.00px;font-size:10.47px;color:#fafafa;transform:scaleX(0.8764)">Michigan</div></div>
<div style="position:absolute;left:806.54px;top:718.78px;transform:rotate(-90deg);transform-origin:0 0"><div class="t" style="left:-0.00px;top:-8.00px;font-size:10.47px;color:#fafafa;transform:scaleX(0.8764)">Mississippi</div></div>
<div style="position:absolute;left:823.35px;top:710.13px;transform:rotate(-90deg);transform-origin:0 0"><div class="t" style="left:-0.00px;top:-8.00px;font-size:10.47px;color:#fafafa;transform:scaleX(0.8764)">Montana</div></div>
<div style="position:absolute;left:840.17px;top:706.04px;transform:rotate(-90deg);transform-origin:0 0"><div class="t" style="left:-0.00px;top:-8.00px;font-size:10.47px;color:#fafafa;transform:scaleX(0.8764)">Nevada</div></div>
<div style="position:absolute;left:856.99px;top:722.35px;transform:rotate(-90deg);transform-origin:0 0"><div class="t" style="left:-0.00px;top:-8.00px;font-size:10.47px;color:#fafafa;transform:scaleX(0.8764)">New Jersey</div></div>
<div style="position:absolute;left:873.81px;top:713.20px;transform:rotate(-90deg);transform-origin:0 0"><div class="t" style="left:-0.00px;top:-8.00px;font-size:10.47px;color:#fafafa;transform:scaleX(0.8764)">New York</div></div>
<div style="position:absolute;left:890.63px;top:728.48px;transform:rotate(-90deg);transform-origin:0 0"><div class="t" style="left:-0.00px;top:-8.00px;font-size:10.47px;color:#fafafa;transform:scaleX(0.8764)">North Dakota</div></div>
<div style="position:absolute;left:907.45px;top:716.25px;transform:rotate(-90deg);transform-origin:0 0"><div class="t" style="left:-0.00px;top:-8.00px;font-size:10.47px;color:#fafafa;transform:scaleX(0.8764)">Oklahoma</div></div>
<div style="position:absolute;left:924.27px;top:729.01px;transform:rotate(-90deg);transform-origin:0 0"><div class="t" style="left:-0.00px;top:-8.00px;font-size:10.47px;color:#fafafa;transform:scaleX(0.8764)">Pennsylvania</div></div>
<div style="position:absolute;left:941.09px;top:728.48px;transform:rotate(-90deg);transform-origin:0 0"><div class="t" style="left:-0.00px;top:-8.00px;font-size:10.47px;color:#fafafa;transform:scaleX(0.8764)">Rhode Island</div></div>
<div style="position:absolute;left:957.91px;top:730.02px;transform:rotate(-90deg);transform-origin:0 0"><div class="t" style="left:-0.00px;top:-8.00px;font-size:10.47px;color:#fafafa;transform:scaleX(0.8764)">South Dakota</div></div>
<div style="position:absolute;left:974.73px;top:698.38px;transform:rotate(-90deg);transform-origin:0 0"><div class="t" style="left:-0.00px;top:-8.00px;font-size:10.47px;color:#fafafa;transform:scaleX(0.8764)">Texas</div></div>
<div style="position:absolute;left:991.55px;top:708.59px;transform:rotate(-90deg);transform-origin:0 0"><div class="t" style="left:-0.00px;top:-8.00px;font-size:10.47px;color:#fafafa;transform:scaleX(0.8764)">Vermont</div></div>
<div style="position:absolute;left:1008.37px;top:722.54px;transform:rotate(-90deg);transform-origin:0 0"><div class="t" style="left:-0.00px;top:-8.00px;font-size:10.47px;color:#fafafa;transform:scaleX(0.8764)">Washington</div></div>
<div style="position:absolute;left:1025.19px;top:716.23px;transform:rotate(-90deg);transform-origin:0 0"><div class="t" style="left:-0.00px;top:-8.00px;font-size:10.47px;color:#fafafa;transform:scaleX(0.8764)">Wisconsin</div></div>
<div class="a" style="left:1060px;top:202px;width:202.5px;height:319px;border-radius:6px;overflow:hidden;border:1px solid #262626;background:#121212">
<div class="a" style="left:-1061px;top:-203px;width:1360px;height:900px">
<div class="a" style="left:1060px;top:202px;width:203px;height:29px;background:#1c1c1c;"></div>
<div class="a" style="left:1060px;top:230.5px;width:203px;height:1.0px;background:#2a2a2a;"></div>
<div class="a" style="left:1141.5px;top:202px;width:1.0px;height:319px;background:#262626;"></div>
<div class="t" style="left:1066.90px;top:210.60px;font-size:11.61px;color:#a3a3a3;transform:scaleX(0.8474);">States</div>
<div class="t" style="left:1148.30px;top:210.60px;font-size:11.78px;color:#a3a3a3;transform:scaleX(0.9138);">Population</div>
<div class="t" style="left:1066.90px;top:238.50px;font-size:11.64px;color:#fafafa;transform:scaleX(0.9092);">California</div>
<div class="a" style="left:1148.3px;top:242.3px;width:62.4px;height:4.7px;border-radius:2.4px;background:#333333;overflow:hidden"><div style="width:62.4px;height:100%;background:#ff4b4b;border-radius:2.4px 0 0 2.4px"></div></div>
<div class="t" style="left:1217.00px;top:239.50px;font-size:11.18px;color:#fafafa;transform:scaleX(0.7636);">39512223</div>
<div class="a" style="left:1060px;top:258px;width:203px;height:1px;background:#222222;"></div>
<div class="t" style="left:1066.90px;top:266.38px;font-size:11.64px;color:#fafafa;transform:scaleX(0.9092);">Texas</div>
<div class="a" style="left:1148.3px;top:270.2px;width:62.4px;height:4.7px;border-radius:2.4px;background:#333333;overflow:hidden"><div style="width:45.8px;height:100%;background:#ff4b4b;border-radius:2.4px 0 0 2.4px"></div></div>
<div class="t" style="left:1217.00px;top:267.38px;font-size:11.18px;color:#fafafa;transform:scaleX(0.7636);">28995881</div>
<div class="a" style="left:1060px;top:286px;width:203px;height:1px;background:#222222;"></div>
<div class="t" style="left:1066.90px;top:294.26px;font-size:11.64px;color:#fafafa;transform:scaleX(0.9092);">Florida</div>
<div class="a" style="left:1148.3px;top:298.1px;width:62.4px;height:4.7px;border-radius:2.4px;background:#333333;overflow:hidden"><div style="width:33.9px;height:100%;background:#ff4b4b;border-radius:2.4px 0 0 2.4px"></div></div>
<div class="t" style="left:1217.00px;top:295.26px;font-size:11.18px;color:#fafafa;transform:scaleX(0.7636);">21477737</div>
<div class="a" style="left:1060px;top:314px;width:203px;height:1px;background:#222222;"></div>
<div class="t" style="left:1066.90px;top:322.14px;font-size:11.64px;color:#fafafa;transform:scaleX(0.9092);">New York</div>
<div class="a" style="left:1148.3px;top:325.9px;width:62.4px;height:4.7px;border-radius:2.4px;background:#333333;overflow:hidden"><div style="width:30.7px;height:100%;background:#ff4b4b;border-radius:2.4px 0 0 2.4px"></div></div>
<div class="t" style="left:1217.00px;top:323.14px;font-size:11.18px;color:#fafafa;transform:scaleX(0.7636);">19453561</div>
<div class="a" style="left:1060px;top:342px;width:203px;height:1px;background:#222222;"></div>
<div class="t" style="left:1066.90px;top:350.02px;font-size:11.64px;color:#fafafa;transform:scaleX(0.9092);">Pennsylvania</div>
<div class="a" style="left:1148.3px;top:353.8px;width:62.4px;height:4.7px;border-radius:2.4px;background:#333333;overflow:hidden"><div style="width:20.2px;height:100%;background:#ff4b4b;border-radius:2.4px 0 0 2.4px"></div></div>
<div class="t" style="left:1217.00px;top:351.02px;font-size:11.18px;color:#fafafa;transform:scaleX(0.7636);">12801989</div>
<div class="a" style="left:1060px;top:370px;width:203px;height:1px;background:#222222;"></div>
<div class="t" style="left:1066.90px;top:377.90px;font-size:11.64px;color:#fafafa;transform:scaleX(0.9092);">Illinois</div>
<div class="a" style="left:1148.3px;top:381.7px;width:62.4px;height:4.7px;border-radius:2.4px;background:#333333;overflow:hidden"><div style="width:20.0px;height:100%;background:#ff4b4b;border-radius:2.4px 0 0 2.4px"></div></div>
<div class="t" style="left:1217.00px;top:378.90px;font-size:11.18px;color:#fafafa;transform:scaleX(0.7636);">12671821</div>
<div class="a" style="left:1060px;top:398px;width:203px;height:1px;background:#222222;"></div>
<div class="t" style="left:1066.90px;top:405.78px;font-size:11.64px;color:#fafafa;transform:scaleX(0.9092);">Ohio</div>
<div class="a" style="left:1148.3px;top:409.6px;width:62.4px;height:4.7px;border-radius:2.4px;background:#333333;overflow:hidden"><div style="width:18.5px;height:100%;background:#ff4b4b;border-radius:2.4px 0 0 2.4px"></div></div>
<div class="t" style="left:1217.64px;top:406.78px;font-size:11.18px;color:#fafafa;transform:scaleX(0.7636);">11689100</div>
<div class="a" style="left:1060px;top:426px;width:203px;height:1px;background:#222222;"></div>
<div class="t" style="left:1066.90px;top:433.66px;font-size:11.64px;color:#fafafa;transform:scaleX(0.9092);">Georgia</div>
<div class="a" style="left:1148.3px;top:437.5px;width:62.4px;height:4.7px;border-radius:2.4px;background:#333333;overflow:hidden"><div style="width:16.8px;height:100%;background:#ff4b4b;border-radius:2.4px 0 0 2.4px"></div></div>
<div class="t" style="left:1217.00px;top:434.66px;font-size:11.18px;color:#fafafa;transform:scaleX(0.7636);">10617423</div>
<div class="a" style="left:1060px;top:454px;width:203px;height:1px;background:#222222;"></div>
<div class="t" style="left:1066.90px;top:461.54px;font-size:11.64px;color:#fafafa;transform:scaleX(0.9092);">North Carolina</div>
<div class="a" style="left:1148.3px;top:465.3px;width:62.4px;height:4.7px;border-radius:2.4px;background:#333333;overflow:hidden"><div style="width:16.6px;height:100%;background:#ff4b4b;border-radius:2.4px 0 0 2.4px"></div></div>
<div class="t" style="left:1217.00px;top:462.54px;font-size:11.18px;color:#fafafa;transform:scaleX(0.7636);">10488084</div>
<div class="a" style="left:1060px;top:481px;width:203px;height:1px;background:#222222;"></div>
<div class="t" style="left:1066.90px;top:489.42px;font-size:11.64px;color:#fafafa;transform:scaleX(0.9092);">Michigan</div>
<div class="a" style="left:1148.3px;top:493.2px;width:62.4px;height:4.7px;border-radius:2.4px;background:#333333;overflow:hidden"><div style="width:15.8px;height:100%;background:#ff4b4b;border-radius:2.4px 0 0 2.4px"></div></div>
<div class="t" style="left:1221.76px;top:490.42px;font-size:11.18px;color:#fafafa;transform:scaleX(0.7636);">9986857</div>
<div class="a" style="left:1060px;top:509px;width:203px;height:1px;background:#222222;"></div>
<div class="t" style="left:1066.90px;top:517.30px;font-size:11.64px;color:#fafafa;transform:scaleX(0.9092);">New Jersey</div>
<div class="a" style="left:1148.3px;top:521.1px;width:62.4px;height:4.7px;border-radius:2.4px;background:#333333;overflow:hidden"><div style="width:14.0px;height:100%;background:#ff4b4b;border-radius:2.4px 0 0 2.4px"></div></div>
<div class="t" style="left:1221.76px;top:518.30px;font-size:11.18px;color:#fafafa;transform:scaleX(0.7636);">8882190</div>
</div></div>
<div class="a" style="left:1059.7px;top:541px;width:211px;height:221px;border:1px solid #2a2a2a;border-radius:7px"></div>
<div class="t" style="left:1073.10px;top:554.70px;font-size:11.20px;color:#fafafa;transform:scaleX(0.9535);">About</div>
<svg style="left:1244.5px;top:556.5px" width="9" height="5.5" viewBox="0 0 9 5.5"><path d="M0.7 4.8L4.5 1L8.3 4.8" fill="none" stroke="#fafafa" stroke-width="1.4"/></svg>
<div class="t" style="left:1096.60px;top:585.70px;font-size:11.77px;color:#fafafa;transform:scaleX(0.9562)">Data: <span style="color:#3d8fd9;text-decoration:underline;text-decoration-thickness:1px;text-underline-offset:1.2px">U.S. Census Bureau</span>.</div>
<div class="a" style="left:1076.9px;top:589.7px;width:4.2px;height:4.2px;border-radius:50%;background:#fafafa"></div>
<div class="t" style="left:1096.60px;top:608.50px;font-size:11.78px;color:#fbad60;font-weight:bold;-webkit-text-stroke:0;transform:scaleX(0.9215);">Gains/Losses</div>
<div class="t" style="left:1168.20px;top:608.50px;font-size:11.77px;color:#fafafa;transform:scaleX(1.0036);">: states with high</div>
<div class="a" style="left:1076.9px;top:612.5px;width:4.2px;height:4.2px;border-radius:50%;background:#fafafa"></div>
<div class="t" style="left:1096.60px;top:628.80px;font-size:11.78px;color:#fafafa;transform:scaleX(1.0665);">inbound/ outbound migration</div>
<div class="t" style="left:1096.60px;top:649.40px;font-size:11.78px;color:#fafafa;">for selected year</div>
<div class="t" style="left:1096.60px;top:672.80px;font-size:11.78px;color:#fbad60;font-weight:bold;-webkit-text-stroke:0;transform:scaleX(0.9633);">States Migration</div>
<div class="t" style="left:1186.00px;top:672.80px;font-size:11.77px;color:#fafafa;transform:scaleX(0.9823);">: percentage</div>
<div class="a" style="left:1076.9px;top:676.8px;width:4.2px;height:4.2px;border-radius:50%;background:#fafafa"></div>
<div class="t" style="left:1096.60px;top:693.00px;font-size:11.78px;color:#fafafa;transform:scaleX(1.0203);">of states with annual</div>
<div class="t" style="left:1096.60px;top:713.20px;font-size:11.78px;color:#fafafa;transform:scaleX(1.0665);">inbound/ outbound migration</div>
<div class="t" style="left:1096.20px;top:733.50px;font-size:11.78px;color:#fafafa;transform:scaleX(0.9419);">&gt; 50,000</div>
<div class="a" style="left:1244px;top:785px;width:53px;height:37px;background:#ff4b4b;border-radius:8px 0 0 0"></div>
<svg style="left:1259px;top:797.5px" width="22" height="12" viewBox="0 0 22 12"><path d="M0.5 2.5L6 9L11 0.5L16 9L21.5 2.5L19 11.5H3Z" fill="#f7f7f7"/><path d="M11 0.5L16 9L19 11.5H11Z" fill="#dcdcdc"/></svg>
</div></div>
<svg style="left:733.4px;top:783.8px" width="12" height="19" viewBox="0 0 12 19"><path d="M0.6 0.6V14.6L3.8 11.6L6.4 17.4L8.6 16.5L6.1 10.9H10.8Z" fill="#000" stroke="#f2f2f2" stroke-width="1.2" stroke-linejoin="round"/></svg>
</body></html>
